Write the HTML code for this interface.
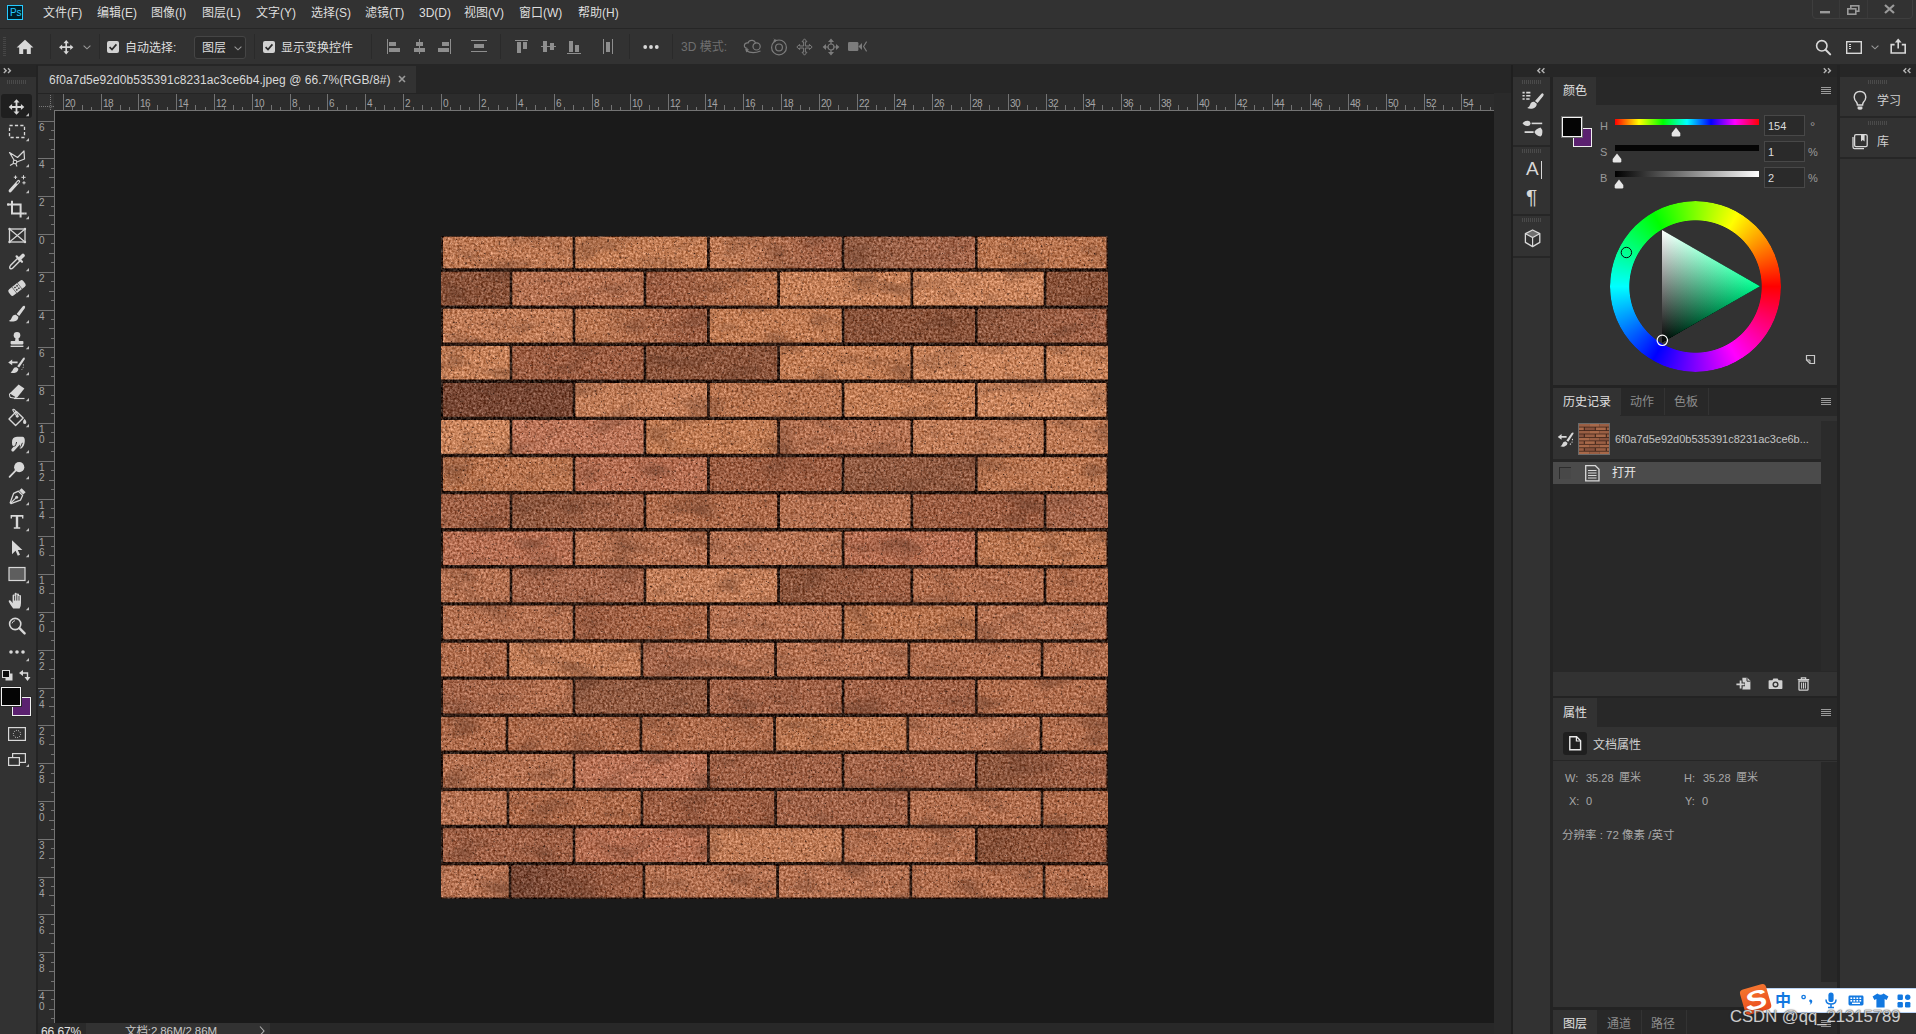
<!DOCTYPE html>
<html lang="zh-CN"><head><meta charset="utf-8"><title>Photoshop</title><style>
html,body{margin:0;padding:0;background:#282828;}
body{width:1916px;height:1034px;position:relative;overflow:hidden;font-family:"Liberation Sans","Noto Sans CJK SC",sans-serif;}
#r{position:absolute;left:0;top:0;width:1916px;height:1034px;overflow:hidden;background:#282828;}
#r div{position:absolute;box-sizing:border-box;}
.t{position:absolute;white-space:nowrap;}
.i{position:absolute;overflow:visible;}
</style></head><body><div id="r">
<div style="left:0px;top:0px;width:1916px;height:28px;background:#323232;"></div>
<div style="left:0px;top:28px;width:1916px;height:1px;background:#262626;"></div>
<div style="left:0px;top:29px;width:1916px;height:35px;background:#323232;"></div>
<div style="left:0px;top:64px;width:1916px;height:1px;background:#262626;"></div>
<div style="left:37px;top:65px;width:1474px;height:28px;background:#262626;"></div>
<div style="left:38px;top:66px;width:378px;height:27px;background:#323232;"></div>
<div style="left:0px;top:65px;width:36px;height:969px;background:#323232;"></div>
<div style="left:0px;top:65px;width:36px;height:12px;background:#262626;"></div>
<div style="left:36px;top:65px;width:2px;height:969px;background:#232323;"></div>
<div style="left:38px;top:93px;width:1456px;height:1px;background:#242424;"></div>
<div style="left:38px;top:94px;width:1456px;height:17px;background:#2c2c2c;"></div>
<div style="left:38px;top:94px;width:16px;height:16px;background:#313131;"></div>
<div style="left:38px;top:111px;width:17px;height:912px;background:#2c2c2c;"></div>
<div style="left:54px;top:110px;width:1440px;height:1px;background:#737373;"></div>
<div style="left:54px;top:110px;width:1px;height:913px;background:#737373;"></div>
<div style="left:55px;top:111px;width:1439px;height:912px;background:#1a1a1a;"></div>
<div style="left:38px;top:1023px;width:1457px;height:11px;background:#282828;"></div>
<div style="left:38px;top:1023px;width:48px;height:11px;background:#2a2a2a;"></div>
<div style="left:86px;top:1023px;width:184px;height:11px;background:#323232;"></div>
<div style="left:1494px;top:93px;width:17px;height:941px;background:#2a2a2a;"></div>
<div style="left:1511px;top:65px;width:2px;height:969px;background:#1f1f1f;"></div>
<div style="left:1513px;top:65px;width:324px;height:12px;background:#262626;"></div>
<div style="left:1513px;top:77px;width:37px;height:957px;background:#323232;"></div>
<div style="left:1550px;top:77px;width:3px;height:957px;background:#232323;"></div>
<div style="left:1553px;top:77px;width:284px;height:957px;background:#282828;"></div>
<div style="left:1837px;top:65px;width:3px;height:969px;background:#232323;"></div>
<div style="left:1840px;top:65px;width:76px;height:12px;background:#262626;"></div>
<div style="left:1840px;top:77px;width:76px;height:957px;background:#323232;"></div>
<span class="t" style="left:43px;top:5px;font-size:12px;line-height:16px;color:#dedede;">文件(F)</span>
<span class="t" style="left:97px;top:5px;font-size:12px;line-height:16px;color:#dedede;">编辑(E)</span>
<span class="t" style="left:151px;top:5px;font-size:12px;line-height:16px;color:#dedede;">图像(I)</span>
<span class="t" style="left:202px;top:5px;font-size:12px;line-height:16px;color:#dedede;">图层(L)</span>
<span class="t" style="left:256px;top:5px;font-size:12px;line-height:16px;color:#dedede;">文字(Y)</span>
<span class="t" style="left:311px;top:5px;font-size:12px;line-height:16px;color:#dedede;">选择(S)</span>
<span class="t" style="left:365px;top:5px;font-size:12px;line-height:16px;color:#dedede;">滤镜(T)</span>
<span class="t" style="left:419px;top:5px;font-size:12px;line-height:16px;color:#dedede;">3D(D)</span>
<span class="t" style="left:464px;top:5px;font-size:12px;line-height:16px;color:#dedede;">视图(V)</span>
<span class="t" style="left:519px;top:5px;font-size:12px;line-height:16px;color:#dedede;">窗口(W)</span>
<span class="t" style="left:578px;top:5px;font-size:12px;line-height:16px;color:#dedede;">帮助(H)</span>
<div style="left:7px;top:5px;width:16px;height:15px;border:1px solid #26c9ff;background:#001e28;"></div>
<span class="t" style="left:10px;top:5px;font-size:10px;line-height:15px;color:#26c9ff;letter-spacing:-0.2px">Ps</span>
<span class="t" style="left:125px;top:40px;font-size:12px;line-height:16px;color:#dedede;">自动选择:</span>
<div style="left:194px;top:36px;width:52px;height:23px;border:1px solid #454545;background:#2a2a2a;border-radius:3px;"></div>
<span class="t" style="left:202px;top:40px;font-size:12px;line-height:16px;color:#dedede;">图层</span>
<span class="t" style="left:281px;top:40px;font-size:12px;line-height:16px;color:#dedede;">显示变换控件</span>
<span class="t" style="left:681px;top:39px;font-size:12px;line-height:16px;color:#6f6f6f;">3D 模式:</span>
<span class="t" style="left:49px;top:72px;font-size:12px;line-height:16px;color:#d9d9d9;letter-spacing:0.07px;">6f0a7d5e92d0b535391c8231ac3ce6b4.jpeg @ 66.7%(RGB/8#)</span>
<span class="t" style="left:41px;top:1024px;font-size:12px;line-height:16px;color:#e0e0e0;letter-spacing:-0.1px;">66.67%</span>
<span class="t" style="left:125px;top:1023px;font-size:11.5px;line-height:16px;color:#c8c8c8;letter-spacing:-0.1px;">文档:2.86M/2.86M</span>
<svg class="i" style="left:0px;top:0px" width="1916" height="112" viewBox="0 0 1916 112" ><rect x="63" y="94" width="1" height="16" fill="#737373"/><rect x="72" y="107" width="1" height="3" fill="#737373"/><rect x="82" y="105" width="1" height="5" fill="#737373"/><rect x="91" y="107" width="1" height="3" fill="#737373"/><rect x="101" y="94" width="1" height="16" fill="#737373"/><rect x="110" y="107" width="1" height="3" fill="#737373"/><rect x="120" y="105" width="1" height="5" fill="#737373"/><rect x="129" y="107" width="1" height="3" fill="#737373"/><rect x="138" y="94" width="1" height="16" fill="#737373"/><rect x="148" y="107" width="1" height="3" fill="#737373"/><rect x="157" y="105" width="1" height="5" fill="#737373"/><rect x="167" y="107" width="1" height="3" fill="#737373"/><rect x="176" y="94" width="1" height="16" fill="#737373"/><rect x="186" y="107" width="1" height="3" fill="#737373"/><rect x="195" y="105" width="1" height="5" fill="#737373"/><rect x="205" y="107" width="1" height="3" fill="#737373"/><rect x="214" y="94" width="1" height="16" fill="#737373"/><rect x="224" y="107" width="1" height="3" fill="#737373"/><rect x="233" y="105" width="1" height="5" fill="#737373"/><rect x="242" y="107" width="1" height="3" fill="#737373"/><rect x="252" y="94" width="1" height="16" fill="#737373"/><rect x="261" y="107" width="1" height="3" fill="#737373"/><rect x="271" y="105" width="1" height="5" fill="#737373"/><rect x="280" y="107" width="1" height="3" fill="#737373"/><rect x="290" y="94" width="1" height="16" fill="#737373"/><rect x="299" y="107" width="1" height="3" fill="#737373"/><rect x="309" y="105" width="1" height="5" fill="#737373"/><rect x="318" y="107" width="1" height="3" fill="#737373"/><rect x="327" y="94" width="1" height="16" fill="#737373"/><rect x="337" y="107" width="1" height="3" fill="#737373"/><rect x="346" y="105" width="1" height="5" fill="#737373"/><rect x="356" y="107" width="1" height="3" fill="#737373"/><rect x="365" y="94" width="1" height="16" fill="#737373"/><rect x="375" y="107" width="1" height="3" fill="#737373"/><rect x="384" y="105" width="1" height="5" fill="#737373"/><rect x="394" y="107" width="1" height="3" fill="#737373"/><rect x="403" y="94" width="1" height="16" fill="#737373"/><rect x="413" y="107" width="1" height="3" fill="#737373"/><rect x="422" y="105" width="1" height="5" fill="#737373"/><rect x="431" y="107" width="1" height="3" fill="#737373"/><rect x="441" y="94" width="1" height="16" fill="#737373"/><rect x="450" y="107" width="1" height="3" fill="#737373"/><rect x="460" y="105" width="1" height="5" fill="#737373"/><rect x="469" y="107" width="1" height="3" fill="#737373"/><rect x="479" y="94" width="1" height="16" fill="#737373"/><rect x="488" y="107" width="1" height="3" fill="#737373"/><rect x="498" y="105" width="1" height="5" fill="#737373"/><rect x="507" y="107" width="1" height="3" fill="#737373"/><rect x="516" y="94" width="1" height="16" fill="#737373"/><rect x="526" y="107" width="1" height="3" fill="#737373"/><rect x="535" y="105" width="1" height="5" fill="#737373"/><rect x="545" y="107" width="1" height="3" fill="#737373"/><rect x="554" y="94" width="1" height="16" fill="#737373"/><rect x="564" y="107" width="1" height="3" fill="#737373"/><rect x="573" y="105" width="1" height="5" fill="#737373"/><rect x="583" y="107" width="1" height="3" fill="#737373"/><rect x="592" y="94" width="1" height="16" fill="#737373"/><rect x="602" y="107" width="1" height="3" fill="#737373"/><rect x="611" y="105" width="1" height="5" fill="#737373"/><rect x="620" y="107" width="1" height="3" fill="#737373"/><rect x="630" y="94" width="1" height="16" fill="#737373"/><rect x="639" y="107" width="1" height="3" fill="#737373"/><rect x="649" y="105" width="1" height="5" fill="#737373"/><rect x="658" y="107" width="1" height="3" fill="#737373"/><rect x="668" y="94" width="1" height="16" fill="#737373"/><rect x="677" y="107" width="1" height="3" fill="#737373"/><rect x="687" y="105" width="1" height="5" fill="#737373"/><rect x="696" y="107" width="1" height="3" fill="#737373"/><rect x="705" y="94" width="1" height="16" fill="#737373"/><rect x="715" y="107" width="1" height="3" fill="#737373"/><rect x="724" y="105" width="1" height="5" fill="#737373"/><rect x="734" y="107" width="1" height="3" fill="#737373"/><rect x="743" y="94" width="1" height="16" fill="#737373"/><rect x="753" y="107" width="1" height="3" fill="#737373"/><rect x="762" y="105" width="1" height="5" fill="#737373"/><rect x="772" y="107" width="1" height="3" fill="#737373"/><rect x="781" y="94" width="1" height="16" fill="#737373"/><rect x="791" y="107" width="1" height="3" fill="#737373"/><rect x="800" y="105" width="1" height="5" fill="#737373"/><rect x="809" y="107" width="1" height="3" fill="#737373"/><rect x="819" y="94" width="1" height="16" fill="#737373"/><rect x="828" y="107" width="1" height="3" fill="#737373"/><rect x="838" y="105" width="1" height="5" fill="#737373"/><rect x="847" y="107" width="1" height="3" fill="#737373"/><rect x="857" y="94" width="1" height="16" fill="#737373"/><rect x="866" y="107" width="1" height="3" fill="#737373"/><rect x="876" y="105" width="1" height="5" fill="#737373"/><rect x="885" y="107" width="1" height="3" fill="#737373"/><rect x="894" y="94" width="1" height="16" fill="#737373"/><rect x="904" y="107" width="1" height="3" fill="#737373"/><rect x="913" y="105" width="1" height="5" fill="#737373"/><rect x="923" y="107" width="1" height="3" fill="#737373"/><rect x="932" y="94" width="1" height="16" fill="#737373"/><rect x="942" y="107" width="1" height="3" fill="#737373"/><rect x="951" y="105" width="1" height="5" fill="#737373"/><rect x="961" y="107" width="1" height="3" fill="#737373"/><rect x="970" y="94" width="1" height="16" fill="#737373"/><rect x="980" y="107" width="1" height="3" fill="#737373"/><rect x="989" y="105" width="1" height="5" fill="#737373"/><rect x="998" y="107" width="1" height="3" fill="#737373"/><rect x="1008" y="94" width="1" height="16" fill="#737373"/><rect x="1017" y="107" width="1" height="3" fill="#737373"/><rect x="1027" y="105" width="1" height="5" fill="#737373"/><rect x="1036" y="107" width="1" height="3" fill="#737373"/><rect x="1046" y="94" width="1" height="16" fill="#737373"/><rect x="1055" y="107" width="1" height="3" fill="#737373"/><rect x="1065" y="105" width="1" height="5" fill="#737373"/><rect x="1074" y="107" width="1" height="3" fill="#737373"/><rect x="1083" y="94" width="1" height="16" fill="#737373"/><rect x="1093" y="107" width="1" height="3" fill="#737373"/><rect x="1102" y="105" width="1" height="5" fill="#737373"/><rect x="1112" y="107" width="1" height="3" fill="#737373"/><rect x="1121" y="94" width="1" height="16" fill="#737373"/><rect x="1131" y="107" width="1" height="3" fill="#737373"/><rect x="1140" y="105" width="1" height="5" fill="#737373"/><rect x="1150" y="107" width="1" height="3" fill="#737373"/><rect x="1159" y="94" width="1" height="16" fill="#737373"/><rect x="1169" y="107" width="1" height="3" fill="#737373"/><rect x="1178" y="105" width="1" height="5" fill="#737373"/><rect x="1187" y="107" width="1" height="3" fill="#737373"/><rect x="1197" y="94" width="1" height="16" fill="#737373"/><rect x="1206" y="107" width="1" height="3" fill="#737373"/><rect x="1216" y="105" width="1" height="5" fill="#737373"/><rect x="1225" y="107" width="1" height="3" fill="#737373"/><rect x="1235" y="94" width="1" height="16" fill="#737373"/><rect x="1244" y="107" width="1" height="3" fill="#737373"/><rect x="1254" y="105" width="1" height="5" fill="#737373"/><rect x="1263" y="107" width="1" height="3" fill="#737373"/><rect x="1272" y="94" width="1" height="16" fill="#737373"/><rect x="1282" y="107" width="1" height="3" fill="#737373"/><rect x="1291" y="105" width="1" height="5" fill="#737373"/><rect x="1301" y="107" width="1" height="3" fill="#737373"/><rect x="1310" y="94" width="1" height="16" fill="#737373"/><rect x="1320" y="107" width="1" height="3" fill="#737373"/><rect x="1329" y="105" width="1" height="5" fill="#737373"/><rect x="1339" y="107" width="1" height="3" fill="#737373"/><rect x="1348" y="94" width="1" height="16" fill="#737373"/><rect x="1358" y="107" width="1" height="3" fill="#737373"/><rect x="1367" y="105" width="1" height="5" fill="#737373"/><rect x="1376" y="107" width="1" height="3" fill="#737373"/><rect x="1386" y="94" width="1" height="16" fill="#737373"/><rect x="1395" y="107" width="1" height="3" fill="#737373"/><rect x="1405" y="105" width="1" height="5" fill="#737373"/><rect x="1414" y="107" width="1" height="3" fill="#737373"/><rect x="1424" y="94" width="1" height="16" fill="#737373"/><rect x="1433" y="107" width="1" height="3" fill="#737373"/><rect x="1443" y="105" width="1" height="5" fill="#737373"/><rect x="1452" y="107" width="1" height="3" fill="#737373"/><rect x="1461" y="94" width="1" height="16" fill="#737373"/><rect x="1471" y="107" width="1" height="3" fill="#737373"/><rect x="1480" y="105" width="1" height="5" fill="#737373"/><rect x="1490" y="107" width="1" height="3" fill="#737373"/></svg>
<span class="t" style="left:65px;top:98px;font-size:10px;line-height:12px;color:#a4a4a4;letter-spacing:-0.5px;">20</span>
<span class="t" style="left:103px;top:98px;font-size:10px;line-height:12px;color:#a4a4a4;letter-spacing:-0.5px;">18</span>
<span class="t" style="left:140px;top:98px;font-size:10px;line-height:12px;color:#a4a4a4;letter-spacing:-0.5px;">16</span>
<span class="t" style="left:178px;top:98px;font-size:10px;line-height:12px;color:#a4a4a4;letter-spacing:-0.5px;">14</span>
<span class="t" style="left:216px;top:98px;font-size:10px;line-height:12px;color:#a4a4a4;letter-spacing:-0.5px;">12</span>
<span class="t" style="left:254px;top:98px;font-size:10px;line-height:12px;color:#a4a4a4;letter-spacing:-0.5px;">10</span>
<span class="t" style="left:292px;top:98px;font-size:10px;line-height:12px;color:#a4a4a4;letter-spacing:-0.5px;">8</span>
<span class="t" style="left:329px;top:98px;font-size:10px;line-height:12px;color:#a4a4a4;letter-spacing:-0.5px;">6</span>
<span class="t" style="left:367px;top:98px;font-size:10px;line-height:12px;color:#a4a4a4;letter-spacing:-0.5px;">4</span>
<span class="t" style="left:405px;top:98px;font-size:10px;line-height:12px;color:#a4a4a4;letter-spacing:-0.5px;">2</span>
<span class="t" style="left:443px;top:98px;font-size:10px;line-height:12px;color:#a4a4a4;letter-spacing:-0.5px;">0</span>
<span class="t" style="left:481px;top:98px;font-size:10px;line-height:12px;color:#a4a4a4;letter-spacing:-0.5px;">2</span>
<span class="t" style="left:518px;top:98px;font-size:10px;line-height:12px;color:#a4a4a4;letter-spacing:-0.5px;">4</span>
<span class="t" style="left:556px;top:98px;font-size:10px;line-height:12px;color:#a4a4a4;letter-spacing:-0.5px;">6</span>
<span class="t" style="left:594px;top:98px;font-size:10px;line-height:12px;color:#a4a4a4;letter-spacing:-0.5px;">8</span>
<span class="t" style="left:632px;top:98px;font-size:10px;line-height:12px;color:#a4a4a4;letter-spacing:-0.5px;">10</span>
<span class="t" style="left:670px;top:98px;font-size:10px;line-height:12px;color:#a4a4a4;letter-spacing:-0.5px;">12</span>
<span class="t" style="left:707px;top:98px;font-size:10px;line-height:12px;color:#a4a4a4;letter-spacing:-0.5px;">14</span>
<span class="t" style="left:745px;top:98px;font-size:10px;line-height:12px;color:#a4a4a4;letter-spacing:-0.5px;">16</span>
<span class="t" style="left:783px;top:98px;font-size:10px;line-height:12px;color:#a4a4a4;letter-spacing:-0.5px;">18</span>
<span class="t" style="left:821px;top:98px;font-size:10px;line-height:12px;color:#a4a4a4;letter-spacing:-0.5px;">20</span>
<span class="t" style="left:859px;top:98px;font-size:10px;line-height:12px;color:#a4a4a4;letter-spacing:-0.5px;">22</span>
<span class="t" style="left:896px;top:98px;font-size:10px;line-height:12px;color:#a4a4a4;letter-spacing:-0.5px;">24</span>
<span class="t" style="left:934px;top:98px;font-size:10px;line-height:12px;color:#a4a4a4;letter-spacing:-0.5px;">26</span>
<span class="t" style="left:972px;top:98px;font-size:10px;line-height:12px;color:#a4a4a4;letter-spacing:-0.5px;">28</span>
<span class="t" style="left:1010px;top:98px;font-size:10px;line-height:12px;color:#a4a4a4;letter-spacing:-0.5px;">30</span>
<span class="t" style="left:1048px;top:98px;font-size:10px;line-height:12px;color:#a4a4a4;letter-spacing:-0.5px;">32</span>
<span class="t" style="left:1085px;top:98px;font-size:10px;line-height:12px;color:#a4a4a4;letter-spacing:-0.5px;">34</span>
<span class="t" style="left:1123px;top:98px;font-size:10px;line-height:12px;color:#a4a4a4;letter-spacing:-0.5px;">36</span>
<span class="t" style="left:1161px;top:98px;font-size:10px;line-height:12px;color:#a4a4a4;letter-spacing:-0.5px;">38</span>
<span class="t" style="left:1199px;top:98px;font-size:10px;line-height:12px;color:#a4a4a4;letter-spacing:-0.5px;">40</span>
<span class="t" style="left:1237px;top:98px;font-size:10px;line-height:12px;color:#a4a4a4;letter-spacing:-0.5px;">42</span>
<span class="t" style="left:1274px;top:98px;font-size:10px;line-height:12px;color:#a4a4a4;letter-spacing:-0.5px;">44</span>
<span class="t" style="left:1312px;top:98px;font-size:10px;line-height:12px;color:#a4a4a4;letter-spacing:-0.5px;">46</span>
<span class="t" style="left:1350px;top:98px;font-size:10px;line-height:12px;color:#a4a4a4;letter-spacing:-0.5px;">48</span>
<span class="t" style="left:1388px;top:98px;font-size:10px;line-height:12px;color:#a4a4a4;letter-spacing:-0.5px;">50</span>
<span class="t" style="left:1426px;top:98px;font-size:10px;line-height:12px;color:#a4a4a4;letter-spacing:-0.5px;">52</span>
<span class="t" style="left:1463px;top:98px;font-size:10px;line-height:12px;color:#a4a4a4;letter-spacing:-0.5px;">54</span>
<svg class="i" style="left:0px;top:0px" width="60" height="112" viewBox="0 0 60 112" ><path d="M39 106.5H54" stroke="#7a7a7a" stroke-dasharray="1 1" fill="none"/><path d="M50.5 95V110" stroke="#7a7a7a" stroke-dasharray="1 1" fill="none"/><rect x="49.5" y="105.5" width="2" height="2" fill="#313131" stroke="#7a7a7a" stroke-width="0.8" transform="rotate(45 50.5 106.5)"/></svg>
<svg class="i" style="left:0px;top:0px" width="60" height="1034" viewBox="0 0 60 1034" ><rect x="38" y="121" width="16" height="1" fill="#737373"/><rect x="51" y="130" width="3" height="1" fill="#737373"/><rect x="49" y="139" width="5" height="1" fill="#737373"/><rect x="51" y="149" width="3" height="1" fill="#737373"/><rect x="38" y="158" width="16" height="1" fill="#737373"/><rect x="51" y="168" width="3" height="1" fill="#737373"/><rect x="49" y="177" width="5" height="1" fill="#737373"/><rect x="51" y="187" width="3" height="1" fill="#737373"/><rect x="38" y="196" width="16" height="1" fill="#737373"/><rect x="51" y="206" width="3" height="1" fill="#737373"/><rect x="49" y="215" width="5" height="1" fill="#737373"/><rect x="51" y="224" width="3" height="1" fill="#737373"/><rect x="38" y="234" width="16" height="1" fill="#737373"/><rect x="51" y="243" width="3" height="1" fill="#737373"/><rect x="49" y="253" width="5" height="1" fill="#737373"/><rect x="51" y="262" width="3" height="1" fill="#737373"/><rect x="38" y="272" width="16" height="1" fill="#737373"/><rect x="51" y="281" width="3" height="1" fill="#737373"/><rect x="49" y="291" width="5" height="1" fill="#737373"/><rect x="51" y="300" width="3" height="1" fill="#737373"/><rect x="38" y="310" width="16" height="1" fill="#737373"/><rect x="51" y="319" width="3" height="1" fill="#737373"/><rect x="49" y="328" width="5" height="1" fill="#737373"/><rect x="51" y="338" width="3" height="1" fill="#737373"/><rect x="38" y="347" width="16" height="1" fill="#737373"/><rect x="51" y="357" width="3" height="1" fill="#737373"/><rect x="49" y="366" width="5" height="1" fill="#737373"/><rect x="51" y="376" width="3" height="1" fill="#737373"/><rect x="38" y="385" width="16" height="1" fill="#737373"/><rect x="51" y="395" width="3" height="1" fill="#737373"/><rect x="49" y="404" width="5" height="1" fill="#737373"/><rect x="51" y="413" width="3" height="1" fill="#737373"/><rect x="38" y="423" width="16" height="1" fill="#737373"/><rect x="51" y="432" width="3" height="1" fill="#737373"/><rect x="49" y="442" width="5" height="1" fill="#737373"/><rect x="51" y="451" width="3" height="1" fill="#737373"/><rect x="38" y="461" width="16" height="1" fill="#737373"/><rect x="51" y="470" width="3" height="1" fill="#737373"/><rect x="49" y="480" width="5" height="1" fill="#737373"/><rect x="51" y="489" width="3" height="1" fill="#737373"/><rect x="38" y="499" width="16" height="1" fill="#737373"/><rect x="51" y="508" width="3" height="1" fill="#737373"/><rect x="49" y="517" width="5" height="1" fill="#737373"/><rect x="51" y="527" width="3" height="1" fill="#737373"/><rect x="38" y="536" width="16" height="1" fill="#737373"/><rect x="51" y="546" width="3" height="1" fill="#737373"/><rect x="49" y="555" width="5" height="1" fill="#737373"/><rect x="51" y="565" width="3" height="1" fill="#737373"/><rect x="38" y="574" width="16" height="1" fill="#737373"/><rect x="51" y="584" width="3" height="1" fill="#737373"/><rect x="49" y="593" width="5" height="1" fill="#737373"/><rect x="51" y="603" width="3" height="1" fill="#737373"/><rect x="38" y="612" width="16" height="1" fill="#737373"/><rect x="51" y="621" width="3" height="1" fill="#737373"/><rect x="49" y="631" width="5" height="1" fill="#737373"/><rect x="51" y="640" width="3" height="1" fill="#737373"/><rect x="38" y="650" width="16" height="1" fill="#737373"/><rect x="51" y="659" width="3" height="1" fill="#737373"/><rect x="49" y="669" width="5" height="1" fill="#737373"/><rect x="51" y="678" width="3" height="1" fill="#737373"/><rect x="38" y="688" width="16" height="1" fill="#737373"/><rect x="51" y="697" width="3" height="1" fill="#737373"/><rect x="49" y="706" width="5" height="1" fill="#737373"/><rect x="51" y="716" width="3" height="1" fill="#737373"/><rect x="38" y="725" width="16" height="1" fill="#737373"/><rect x="51" y="735" width="3" height="1" fill="#737373"/><rect x="49" y="744" width="5" height="1" fill="#737373"/><rect x="51" y="754" width="3" height="1" fill="#737373"/><rect x="38" y="763" width="16" height="1" fill="#737373"/><rect x="51" y="773" width="3" height="1" fill="#737373"/><rect x="49" y="782" width="5" height="1" fill="#737373"/><rect x="51" y="792" width="3" height="1" fill="#737373"/><rect x="38" y="801" width="16" height="1" fill="#737373"/><rect x="51" y="810" width="3" height="1" fill="#737373"/><rect x="49" y="820" width="5" height="1" fill="#737373"/><rect x="51" y="829" width="3" height="1" fill="#737373"/><rect x="38" y="839" width="16" height="1" fill="#737373"/><rect x="51" y="848" width="3" height="1" fill="#737373"/><rect x="49" y="858" width="5" height="1" fill="#737373"/><rect x="51" y="867" width="3" height="1" fill="#737373"/><rect x="38" y="877" width="16" height="1" fill="#737373"/><rect x="51" y="886" width="3" height="1" fill="#737373"/><rect x="49" y="895" width="5" height="1" fill="#737373"/><rect x="51" y="905" width="3" height="1" fill="#737373"/><rect x="38" y="914" width="16" height="1" fill="#737373"/><rect x="51" y="924" width="3" height="1" fill="#737373"/><rect x="49" y="933" width="5" height="1" fill="#737373"/><rect x="51" y="943" width="3" height="1" fill="#737373"/><rect x="38" y="952" width="16" height="1" fill="#737373"/><rect x="51" y="962" width="3" height="1" fill="#737373"/><rect x="49" y="971" width="5" height="1" fill="#737373"/><rect x="51" y="981" width="3" height="1" fill="#737373"/><rect x="38" y="990" width="16" height="1" fill="#737373"/><rect x="51" y="999" width="3" height="1" fill="#737373"/><rect x="49" y="1009" width="5" height="1" fill="#737373"/><rect x="51" y="1018" width="3" height="1" fill="#737373"/></svg>
<span class="t" style="left:39px;top:122px;font-size:10px;line-height:12px;color:#a4a4a4;">6</span>
<span class="t" style="left:39px;top:159px;font-size:10px;line-height:12px;color:#a4a4a4;">4</span>
<span class="t" style="left:39px;top:197px;font-size:10px;line-height:12px;color:#a4a4a4;">2</span>
<span class="t" style="left:39px;top:235px;font-size:10px;line-height:12px;color:#a4a4a4;">0</span>
<span class="t" style="left:39px;top:273px;font-size:10px;line-height:12px;color:#a4a4a4;">2</span>
<span class="t" style="left:39px;top:311px;font-size:10px;line-height:12px;color:#a4a4a4;">4</span>
<span class="t" style="left:39px;top:348px;font-size:10px;line-height:12px;color:#a4a4a4;">6</span>
<span class="t" style="left:39px;top:386px;font-size:10px;line-height:12px;color:#a4a4a4;">8</span>
<span class="t" style="left:39px;top:424px;font-size:10px;line-height:12px;color:#a4a4a4;">1</span>
<span class="t" style="left:39px;top:434px;font-size:10px;line-height:12px;color:#a4a4a4;">0</span>
<span class="t" style="left:39px;top:462px;font-size:10px;line-height:12px;color:#a4a4a4;">1</span>
<span class="t" style="left:39px;top:472px;font-size:10px;line-height:12px;color:#a4a4a4;">2</span>
<span class="t" style="left:39px;top:500px;font-size:10px;line-height:12px;color:#a4a4a4;">1</span>
<span class="t" style="left:39px;top:510px;font-size:10px;line-height:12px;color:#a4a4a4;">4</span>
<span class="t" style="left:39px;top:537px;font-size:10px;line-height:12px;color:#a4a4a4;">1</span>
<span class="t" style="left:39px;top:547px;font-size:10px;line-height:12px;color:#a4a4a4;">6</span>
<span class="t" style="left:39px;top:575px;font-size:10px;line-height:12px;color:#a4a4a4;">1</span>
<span class="t" style="left:39px;top:585px;font-size:10px;line-height:12px;color:#a4a4a4;">8</span>
<span class="t" style="left:39px;top:613px;font-size:10px;line-height:12px;color:#a4a4a4;">2</span>
<span class="t" style="left:39px;top:623px;font-size:10px;line-height:12px;color:#a4a4a4;">0</span>
<span class="t" style="left:39px;top:651px;font-size:10px;line-height:12px;color:#a4a4a4;">2</span>
<span class="t" style="left:39px;top:661px;font-size:10px;line-height:12px;color:#a4a4a4;">2</span>
<span class="t" style="left:39px;top:689px;font-size:10px;line-height:12px;color:#a4a4a4;">2</span>
<span class="t" style="left:39px;top:699px;font-size:10px;line-height:12px;color:#a4a4a4;">4</span>
<span class="t" style="left:39px;top:726px;font-size:10px;line-height:12px;color:#a4a4a4;">2</span>
<span class="t" style="left:39px;top:736px;font-size:10px;line-height:12px;color:#a4a4a4;">6</span>
<span class="t" style="left:39px;top:764px;font-size:10px;line-height:12px;color:#a4a4a4;">2</span>
<span class="t" style="left:39px;top:774px;font-size:10px;line-height:12px;color:#a4a4a4;">8</span>
<span class="t" style="left:39px;top:802px;font-size:10px;line-height:12px;color:#a4a4a4;">3</span>
<span class="t" style="left:39px;top:812px;font-size:10px;line-height:12px;color:#a4a4a4;">0</span>
<span class="t" style="left:39px;top:840px;font-size:10px;line-height:12px;color:#a4a4a4;">3</span>
<span class="t" style="left:39px;top:850px;font-size:10px;line-height:12px;color:#a4a4a4;">2</span>
<span class="t" style="left:39px;top:878px;font-size:10px;line-height:12px;color:#a4a4a4;">3</span>
<span class="t" style="left:39px;top:888px;font-size:10px;line-height:12px;color:#a4a4a4;">4</span>
<span class="t" style="left:39px;top:915px;font-size:10px;line-height:12px;color:#a4a4a4;">3</span>
<span class="t" style="left:39px;top:925px;font-size:10px;line-height:12px;color:#a4a4a4;">6</span>
<span class="t" style="left:39px;top:953px;font-size:10px;line-height:12px;color:#a4a4a4;">3</span>
<span class="t" style="left:39px;top:963px;font-size:10px;line-height:12px;color:#a4a4a4;">8</span>
<span class="t" style="left:39px;top:991px;font-size:10px;line-height:12px;color:#a4a4a4;">4</span>
<span class="t" style="left:39px;top:1001px;font-size:10px;line-height:12px;color:#a4a4a4;">0</span>
<svg class="i" style="left:441px;top:235.5px;overflow:hidden" width="667" height="663" viewBox="0 0 667 663"><defs><linearGradient id="bg1" x1="0" x2="1" y1="0" y2="0"><stop offset="0.15" stop-color="#bf7b56"/><stop offset="0.85" stop-color="#a36449"/></linearGradient><linearGradient id="bg2" x1="0" x2="1" y1="0" y2="0"><stop offset="0.15" stop-color="#955e45"/><stop offset="0.85" stop-color="#a7684d"/></linearGradient><linearGradient id="bg3" x1="0" x2="1" y1="0" y2="0"><stop offset="0.15" stop-color="#9e5f44"/><stop offset="0.85" stop-color="#ba7651"/></linearGradient><linearGradient id="bg4" x1="0" x2="1" y1="0" y2="0"><stop offset="0.15" stop-color="#bc7853"/><stop offset="0.85" stop-color="#a06146"/></linearGradient><linearGradient id="bg5" x1="0" x2="1" y1="0" y2="0"><stop offset="0.15" stop-color="#915a41"/><stop offset="0.85" stop-color="#a36449"/></linearGradient><linearGradient id="bg6" x1="0" x2="1" y1="0" y2="0"><stop offset="0.15" stop-color="#915a41"/><stop offset="0.85" stop-color="#a36449"/></linearGradient><linearGradient id="bg7" x1="0" x2="1" y1="0" y2="0"><stop offset="0.15" stop-color="#8e573e"/><stop offset="0.85" stop-color="#a06146"/></linearGradient><linearGradient id="bg8" x1="0" x2="1" y1="0" y2="0"><stop offset="0.15" stop-color="#9e5f44"/><stop offset="0.85" stop-color="#ae6b4b"/></linearGradient><linearGradient id="bg9" x1="0" x2="1" y1="0" y2="0"><stop offset="0.15" stop-color="#a7684d"/><stop offset="0.85" stop-color="#b77454"/></linearGradient><linearGradient id="bg10" x1="0" x2="1" y1="0" y2="0"><stop offset="0.15" stop-color="#a4654a"/><stop offset="0.85" stop-color="#b47151"/></linearGradient><linearGradient id="bg11" x1="0" x2="1" y1="0" y2="0"><stop offset="0.15" stop-color="#8f583f"/><stop offset="0.85" stop-color="#a16247"/></linearGradient><linearGradient id="bg12" x1="0" x2="1" y1="0" y2="0"><stop offset="0.15" stop-color="#8b543b"/><stop offset="0.85" stop-color="#9d5e43"/></linearGradient><linearGradient id="bg13" x1="0" x2="1" y1="0" y2="0"><stop offset="0.15" stop-color="#7b4a37"/><stop offset="0.85" stop-color="#9e5f44"/></linearGradient><filter id="bn" x="0" y="0" width="100%" height="100%" color-interpolation-filters="sRGB">
<feGaussianBlur in="SourceGraphic" stdDeviation="0.5" result="src"/>
<feTurbulence type="fractalNoise" baseFrequency="0.42" numOctaves="3" seed="3" result="n"/>
<feColorMatrix in="n" type="matrix" values="1 0 0 0 0  1 0 0 0 0  1 0 0 0 0  0 0 0 0 1" result="g"/>
<feComposite in="src" in2="g" operator="arithmetic" k1="0" k2="1" k3="0.6" k4="-0.3" result="tex"/>
<feColorMatrix in="n" type="matrix" values="0 0 0 0 0  0 0 0 0 0  0 0 0 0 0  0 5 0 0 -3.45" result="a"/>
<feFlood flood-color="#3c2015" result="f"/>
<feComposite in="f" in2="a" operator="in" result="spk"/>
<feTurbulence type="fractalNoise" baseFrequency="0.025 0.05" numOctaves="2" seed="11" result="n2"/>
<feColorMatrix in="n2" type="matrix" values="0 0 0 0 0  0 0 0 0 0  0 0 0 0 0  0 0 1.2 0 -0.62" result="a2"/>
<feFlood flood-color="#5a3424" result="f2"/>
<feComposite in="f2" in2="a2" operator="in" result="blot"/>
<feTurbulence type="fractalNoise" baseFrequency="0.3" numOctaves="2" seed="23" result="n3"/>
<feColorMatrix in="n3" type="matrix" values="0 0 0 0 0  0 0 0 0 0  0 0 0 0 0  4 0 0 0 -2.62" result="a3"/>
<feFlood flood-color="#55301f" result="f3"/>
<feComposite in="f3" in2="a3" operator="in" result="fleck"/>
<feMerge><feMergeNode in="tex"/><feMergeNode in="blot"/><feMergeNode in="fleck"/><feMergeNode in="spk"/></feMerge>
<feGaussianBlur stdDeviation="0.4"/>
</filter></defs><g filter="url(#bn)"><rect x="-2" y="-2" width="671" height="667" fill="#24150e"/><rect x="2.0" y="0.8" width="129.7" height="31.5" rx="1.2" fill="#be7a55"/><rect x="134.3" y="0.8" width="131.7" height="31.5" rx="1.2" fill="#c37e56"/><rect x="268.8" y="0.8" width="131.9" height="31.5" rx="1.2" fill="url(#bg1)"/><rect x="403.4" y="0.8" width="130.6" height="31.5" rx="1.2" fill="url(#bg2)"/><rect x="536.6" y="0.8" width="128.9" height="31.5" rx="1.2" fill="#b97550"/><rect x="0.0" y="35.7" width="68.7" height="33.7" rx="1.2" fill="#8c553c"/><rect x="71.3" y="35.7" width="131.3" height="33.7" rx="1.2" fill="#b57252"/><rect x="205.3" y="35.7" width="130.9" height="33.7" rx="1.2" fill="url(#bg3)"/><rect x="339.0" y="35.7" width="130.5" height="33.7" rx="1.2" fill="#c68159"/><rect x="472.2" y="35.7" width="130.5" height="33.7" rx="1.2" fill="#ca855d"/><rect x="605.4" y="35.7" width="61.6" height="33.7" rx="1.2" fill="#8b543b"/><rect x="2.0" y="72.8" width="129.7" height="33.7" rx="1.2" fill="#c17d58"/><rect x="134.3" y="72.8" width="131.7" height="33.7" rx="1.2" fill="url(#bg4)"/><rect x="268.8" y="72.8" width="131.9" height="33.7" rx="1.2" fill="#c17c54"/><rect x="403.4" y="72.8" width="130.6" height="33.7" rx="1.2" fill="#8c553c"/><rect x="536.6" y="72.8" width="128.9" height="33.7" rx="1.2" fill="url(#bg5)"/><rect x="0.0" y="109.9" width="68.7" height="33.7" rx="1.2" fill="#c7825a"/><rect x="71.3" y="109.9" width="131.3" height="33.7" rx="1.2" fill="#9e5f44"/><rect x="205.3" y="109.9" width="130.9" height="33.7" rx="1.2" fill="#8e573e"/><rect x="339.0" y="109.9" width="130.5" height="33.7" rx="1.2" fill="#c27d55"/><rect x="472.2" y="109.9" width="130.5" height="33.7" rx="1.2" fill="#c9845c"/><rect x="605.4" y="109.9" width="61.6" height="33.7" rx="1.2" fill="#c7825a"/><rect x="2.0" y="147.0" width="129.7" height="33.7" rx="1.2" fill="#7a4936"/><rect x="134.3" y="147.0" width="131.7" height="33.7" rx="1.2" fill="#c27e59"/><rect x="268.8" y="147.0" width="131.9" height="33.7" rx="1.2" fill="#ba7651"/><rect x="403.4" y="147.0" width="130.6" height="33.7" rx="1.2" fill="#c47f57"/><rect x="536.6" y="147.0" width="128.9" height="33.7" rx="1.2" fill="#cb865e"/><rect x="0.0" y="184.1" width="68.7" height="33.7" rx="1.2" fill="#cb865e"/><rect x="71.3" y="184.1" width="131.3" height="33.7" rx="1.2" fill="#bc7559"/><rect x="205.3" y="184.1" width="130.9" height="33.7" rx="1.2" fill="#c17c54"/><rect x="339.0" y="184.1" width="130.5" height="33.7" rx="1.2" fill="#b67353"/><rect x="472.2" y="184.1" width="130.5" height="33.7" rx="1.2" fill="#c27e59"/><rect x="605.4" y="184.1" width="61.6" height="33.7" rx="1.2" fill="#bf7b56"/><rect x="2.0" y="221.2" width="129.7" height="33.7" rx="1.2" fill="#b97550"/><rect x="134.3" y="221.2" width="131.7" height="33.7" rx="1.2" fill="#b66f53"/><rect x="268.8" y="221.2" width="131.9" height="33.7" rx="1.2" fill="#9d5e43"/><rect x="403.4" y="221.2" width="130.6" height="33.7" rx="1.2" fill="#935c43"/><rect x="536.6" y="221.2" width="128.9" height="33.7" rx="1.2" fill="#bb7752"/><rect x="0.0" y="258.3" width="68.7" height="33.7" rx="1.2" fill="#a16247"/><rect x="71.3" y="258.3" width="131.3" height="33.7" rx="1.2" fill="url(#bg6)"/><rect x="205.3" y="258.3" width="130.9" height="33.7" rx="1.2" fill="#af6c4c"/><rect x="339.0" y="258.3" width="130.5" height="33.7" rx="1.2" fill="#b57252"/><rect x="472.2" y="258.3" width="130.5" height="33.7" rx="1.2" fill="#9e5f44"/><rect x="605.4" y="258.3" width="61.6" height="33.7" rx="1.2" fill="#a6674c"/><rect x="2.0" y="295.4" width="129.7" height="33.7" rx="1.2" fill="#b77054"/><rect x="134.3" y="295.4" width="131.7" height="33.7" rx="1.2" fill="#b57252"/><rect x="268.8" y="295.4" width="131.9" height="33.7" rx="1.2" fill="#b77454"/><rect x="403.4" y="295.4" width="130.6" height="33.7" rx="1.2" fill="#b56e52"/><rect x="536.6" y="295.4" width="128.9" height="33.7" rx="1.2" fill="#ba7651"/><rect x="0.0" y="332.5" width="68.7" height="33.7" rx="1.2" fill="#b67353"/><rect x="71.3" y="332.5" width="131.3" height="33.7" rx="1.2" fill="#a6674c"/><rect x="205.3" y="332.5" width="130.9" height="33.7" rx="1.2" fill="#c37f5a"/><rect x="339.0" y="332.5" width="130.5" height="33.7" rx="1.2" fill="url(#bg7)"/><rect x="472.2" y="332.5" width="130.5" height="33.7" rx="1.2" fill="#b26f4f"/><rect x="605.4" y="332.5" width="61.6" height="33.7" rx="1.2" fill="#ae6b4b"/><rect x="2.0" y="369.6" width="129.7" height="33.7" rx="1.2" fill="#b57252"/><rect x="134.3" y="369.6" width="131.7" height="33.7" rx="1.2" fill="url(#bg8)"/><rect x="268.8" y="369.6" width="131.9" height="33.7" rx="1.2" fill="#b67353"/><rect x="403.4" y="369.6" width="130.6" height="33.7" rx="1.2" fill="#b97550"/><rect x="536.6" y="369.6" width="128.9" height="33.7" rx="1.2" fill="#b67353"/><rect x="0.0" y="406.7" width="65.7" height="33.7" rx="1.2" fill="#b06d4d"/><rect x="68.3" y="406.7" width="131.3" height="33.7" rx="1.2" fill="#c07c57"/><rect x="202.3" y="406.7" width="130.9" height="33.7" rx="1.2" fill="url(#bg9)"/><rect x="336.0" y="406.7" width="130.5" height="33.7" rx="1.2" fill="#b57252"/><rect x="469.2" y="406.7" width="130.5" height="33.7" rx="1.2" fill="#b37050"/><rect x="602.4" y="406.7" width="64.6" height="33.7" rx="1.2" fill="#b26f4f"/><rect x="2.0" y="443.8" width="129.7" height="33.7" rx="1.2" fill="url(#bg10)"/><rect x="134.3" y="443.8" width="131.7" height="33.7" rx="1.2" fill="#945d44"/><rect x="268.8" y="443.8" width="131.9" height="33.7" rx="1.2" fill="#a4654a"/><rect x="403.4" y="443.8" width="130.6" height="33.7" rx="1.2" fill="#a26348"/><rect x="536.6" y="443.8" width="128.9" height="33.7" rx="1.2" fill="#b16e4e"/><rect x="0.0" y="480.9" width="64.7" height="33.7" rx="1.2" fill="#b06d4d"/><rect x="67.3" y="480.9" width="131.3" height="33.7" rx="1.2" fill="#af6c4c"/><rect x="201.3" y="480.9" width="130.9" height="33.7" rx="1.2" fill="#b06d4d"/><rect x="335.0" y="480.9" width="130.5" height="33.7" rx="1.2" fill="#ba7651"/><rect x="468.2" y="480.9" width="130.5" height="33.7" rx="1.2" fill="#b67353"/><rect x="601.4" y="480.9" width="65.6" height="33.7" rx="1.2" fill="#b16e4e"/><rect x="2.0" y="518.0" width="129.7" height="33.7" rx="1.2" fill="#b57252"/><rect x="134.3" y="518.0" width="131.7" height="33.7" rx="1.2" fill="#ba7357"/><rect x="268.8" y="518.0" width="131.9" height="33.7" rx="1.2" fill="#a26348"/><rect x="403.4" y="518.0" width="130.6" height="33.7" rx="1.2" fill="#a4654a"/><rect x="536.6" y="518.0" width="128.9" height="33.7" rx="1.2" fill="url(#bg11)"/><rect x="0.0" y="555.1" width="65.7" height="33.7" rx="1.2" fill="#b67353"/><rect x="68.3" y="555.1" width="131.3" height="33.7" rx="1.2" fill="#ae6b4b"/><rect x="202.3" y="555.1" width="130.9" height="33.7" rx="1.2" fill="#9e5f44"/><rect x="336.0" y="555.1" width="130.5" height="33.7" rx="1.2" fill="#a5664b"/><rect x="469.2" y="555.1" width="130.5" height="33.7" rx="1.2" fill="#b37050"/><rect x="602.4" y="555.1" width="64.6" height="33.7" rx="1.2" fill="#af6c4c"/><rect x="2.0" y="592.2" width="129.7" height="33.7" rx="1.2" fill="#a26348"/><rect x="134.3" y="592.2" width="131.7" height="33.7" rx="1.2" fill="#b56e52"/><rect x="268.8" y="592.2" width="131.9" height="33.7" rx="1.2" fill="#c07c57"/><rect x="403.4" y="592.2" width="130.6" height="33.7" rx="1.2" fill="#b37050"/><rect x="536.6" y="592.2" width="128.9" height="33.7" rx="1.2" fill="url(#bg12)"/><rect x="0.0" y="629.3" width="67.7" height="32.2" rx="1.2" fill="#b77454"/><rect x="70.3" y="629.3" width="131.3" height="32.2" rx="1.2" fill="url(#bg13)"/><rect x="204.3" y="629.3" width="130.9" height="32.2" rx="1.2" fill="#b57252"/><rect x="338.0" y="629.3" width="130.5" height="32.2" rx="1.2" fill="#b67353"/><rect x="471.2" y="629.3" width="130.5" height="32.2" rx="1.2" fill="#b26f4f"/><rect x="604.4" y="629.3" width="62.6" height="32.2" rx="1.2" fill="#b26f4f"/></g></svg>
<svg class="i" style="left:3px;top:68px" width="8" height="6" viewBox="0 0 8 6" ><path d="M0.8 0.3L3.2 2.7L0.8 5.1M5 0.3L7.4 2.7L5 5.1" fill="none" stroke="#b4b4b4" stroke-width="1.4"/></svg>
<svg class="i" style="left:1537px;top:68px" width="8" height="6" viewBox="0 0 8 6" ><path d="M3.2 0.3L0.8 2.7L3.2 5.1M7.4 0.3L5 2.7L7.4 5.1" fill="none" stroke="#b4b4b4" stroke-width="1.4"/></svg>
<svg class="i" style="left:1823px;top:68px" width="8" height="6" viewBox="0 0 8 6" ><path d="M0.8 0.3L3.2 2.7L0.8 5.1M5 0.3L7.4 2.7L5 5.1" fill="none" stroke="#b4b4b4" stroke-width="1.4"/></svg>
<svg class="i" style="left:1903px;top:68px" width="8" height="6" viewBox="0 0 8 6" ><path d="M3.2 0.3L0.8 2.7L3.2 5.1M7.4 0.3L5 2.7L7.4 5.1" fill="none" stroke="#b4b4b4" stroke-width="1.4"/></svg>
<svg class="i" style="left:7px;top:80px" width="20" height="4" viewBox="0 0 20 4" ><rect x="0" y="0" width="1" height="4" fill="#4a4a4a"/><rect x="2" y="0" width="1" height="4" fill="#4a4a4a"/><rect x="4" y="0" width="1" height="4" fill="#4a4a4a"/><rect x="6" y="0" width="1" height="4" fill="#4a4a4a"/><rect x="8" y="0" width="1" height="4" fill="#4a4a4a"/><rect x="10" y="0" width="1" height="4" fill="#4a4a4a"/><rect x="12" y="0" width="1" height="4" fill="#4a4a4a"/><rect x="14" y="0" width="1" height="4" fill="#4a4a4a"/><rect x="16" y="0" width="1" height="4" fill="#4a4a4a"/><rect x="18" y="0" width="1" height="4" fill="#4a4a4a"/></svg>
<svg class="i" style="left:1522px;top:80px" width="20" height="4" viewBox="0 0 20 4" ><rect x="0" y="0" width="1" height="4" fill="#4a4a4a"/><rect x="2" y="0" width="1" height="4" fill="#4a4a4a"/><rect x="4" y="0" width="1" height="4" fill="#4a4a4a"/><rect x="6" y="0" width="1" height="4" fill="#4a4a4a"/><rect x="8" y="0" width="1" height="4" fill="#4a4a4a"/><rect x="10" y="0" width="1" height="4" fill="#4a4a4a"/><rect x="12" y="0" width="1" height="4" fill="#4a4a4a"/><rect x="14" y="0" width="1" height="4" fill="#4a4a4a"/><rect x="16" y="0" width="1" height="4" fill="#4a4a4a"/><rect x="18" y="0" width="1" height="4" fill="#4a4a4a"/></svg>
<svg class="i" style="left:1522px;top:149px" width="20" height="4" viewBox="0 0 20 4" ><rect x="0" y="0" width="1" height="4" fill="#4a4a4a"/><rect x="2" y="0" width="1" height="4" fill="#4a4a4a"/><rect x="4" y="0" width="1" height="4" fill="#4a4a4a"/><rect x="6" y="0" width="1" height="4" fill="#4a4a4a"/><rect x="8" y="0" width="1" height="4" fill="#4a4a4a"/><rect x="10" y="0" width="1" height="4" fill="#4a4a4a"/><rect x="12" y="0" width="1" height="4" fill="#4a4a4a"/><rect x="14" y="0" width="1" height="4" fill="#4a4a4a"/><rect x="16" y="0" width="1" height="4" fill="#4a4a4a"/><rect x="18" y="0" width="1" height="4" fill="#4a4a4a"/></svg>
<svg class="i" style="left:1522px;top:218px" width="20" height="4" viewBox="0 0 20 4" ><rect x="0" y="0" width="1" height="4" fill="#4a4a4a"/><rect x="2" y="0" width="1" height="4" fill="#4a4a4a"/><rect x="4" y="0" width="1" height="4" fill="#4a4a4a"/><rect x="6" y="0" width="1" height="4" fill="#4a4a4a"/><rect x="8" y="0" width="1" height="4" fill="#4a4a4a"/><rect x="10" y="0" width="1" height="4" fill="#4a4a4a"/><rect x="12" y="0" width="1" height="4" fill="#4a4a4a"/><rect x="14" y="0" width="1" height="4" fill="#4a4a4a"/><rect x="16" y="0" width="1" height="4" fill="#4a4a4a"/><rect x="18" y="0" width="1" height="4" fill="#4a4a4a"/></svg>
<svg class="i" style="left:1868px;top:80px" width="20" height="4" viewBox="0 0 20 4" ><rect x="0" y="0" width="1" height="4" fill="#4a4a4a"/><rect x="2" y="0" width="1" height="4" fill="#4a4a4a"/><rect x="4" y="0" width="1" height="4" fill="#4a4a4a"/><rect x="6" y="0" width="1" height="4" fill="#4a4a4a"/><rect x="8" y="0" width="1" height="4" fill="#4a4a4a"/><rect x="10" y="0" width="1" height="4" fill="#4a4a4a"/><rect x="12" y="0" width="1" height="4" fill="#4a4a4a"/><rect x="14" y="0" width="1" height="4" fill="#4a4a4a"/><rect x="16" y="0" width="1" height="4" fill="#4a4a4a"/><rect x="18" y="0" width="1" height="4" fill="#4a4a4a"/></svg>
<svg class="i" style="left:1868px;top:121px" width="20" height="4" viewBox="0 0 20 4" ><rect x="0" y="0" width="1" height="4" fill="#4a4a4a"/><rect x="2" y="0" width="1" height="4" fill="#4a4a4a"/><rect x="4" y="0" width="1" height="4" fill="#4a4a4a"/><rect x="6" y="0" width="1" height="4" fill="#4a4a4a"/><rect x="8" y="0" width="1" height="4" fill="#4a4a4a"/><rect x="10" y="0" width="1" height="4" fill="#4a4a4a"/><rect x="12" y="0" width="1" height="4" fill="#4a4a4a"/><rect x="14" y="0" width="1" height="4" fill="#4a4a4a"/><rect x="16" y="0" width="1" height="4" fill="#4a4a4a"/><rect x="18" y="0" width="1" height="4" fill="#4a4a4a"/></svg>
<div style="left:1513px;top:145px;width:37px;height:2px;background:#262626;"></div>
<div style="left:1513px;top:214px;width:37px;height:2px;background:#262626;"></div>
<div style="left:1513px;top:256px;width:37px;height:2px;background:#262626;"></div>
<div style="left:1840px;top:116px;width:76px;height:2px;background:#262626;"></div>
<div style="left:1840px;top:157px;width:76px;height:2px;background:#262626;"></div>
<span class="t" style="left:1877px;top:93px;font-size:12px;line-height:16px;color:#d0d0d0;">学习</span>
<span class="t" style="left:1877px;top:134px;font-size:12px;line-height:16px;color:#d0d0d0;">库</span>
<div style="left:1553px;top:77px;width:284px;height:28px;background:#282828;"></div>
<div style="left:1553px;top:77px;width:43px;height:28px;background:#323232;"></div>
<div style="left:1553px;top:105px;width:284px;height:280px;background:#323232;"></div>
<div style="left:1553px;top:385px;width:284px;height:3px;background:#232323;"></div>
<span class="t" style="left:1563px;top:83px;font-size:12px;line-height:16px;color:#e0e0e0;">颜色</span>
<svg class="i" style="left:1821px;top:87px" width="10" height="8" viewBox="0 0 10 8" ><path d="M0 .5H10M0 2.5H10M0 4.5H10M0 6.5H10" stroke="#9a9a9a" stroke-width="1" fill="none"/></svg>
<div style="left:1573px;top:128px;width:19px;height:19px;background:#5b2170;border:1px solid #f0f0f0;"></div>
<div style="left:1561px;top:116px;width:22px;height:22px;background:#050505;border:1px solid #6a6a6a;box-shadow:inset 0 0 0 1px #f4f4f4;"></div>
<span class="t" style="left:1600px;top:118px;font-size:11px;line-height:16px;color:#9a9a9a;">H</span>
<span class="t" style="left:1600px;top:144px;font-size:11px;line-height:16px;color:#9a9a9a;">S</span>
<span class="t" style="left:1600px;top:170px;font-size:11px;line-height:16px;color:#9a9a9a;">B</span>
<div style="left:1615px;top:119px;width:144px;height:6px;background:linear-gradient(90deg,#f00 0%,#ff0 16.66%,#0f0 33.33%,#0ff 50%,#00f 66.66%,#f0f 83.33%,#f00 100%);"></div>
<div style="left:1615px;top:145px;width:144px;height:6px;background:#050505;"></div>
<div style="left:1615px;top:171px;width:144px;height:6px;background:linear-gradient(90deg,#000,#fff);"></div>
<svg class="i" style="left:1671px;top:126.5px" width="10" height="10" viewBox="0 0 10 10" ><path d="M5 0.5L9.3 6V8.2Q9.3 9.5 8 9.5H2Q0.7 9.5 0.7 8.2V6Z" fill="#e6e6e6"/></svg>
<svg class="i" style="left:1612px;top:152.5px" width="10" height="10" viewBox="0 0 10 10" ><path d="M5 0.5L9.3 6V8.2Q9.3 9.5 8 9.5H2Q0.7 9.5 0.7 8.2V6Z" fill="#e6e6e6"/></svg>
<svg class="i" style="left:1614px;top:178.5px" width="10" height="10" viewBox="0 0 10 10" ><path d="M5 0.5L9.3 6V8.2Q9.3 9.5 8 9.5H2Q0.7 9.5 0.7 8.2V6Z" fill="#e6e6e6"/></svg>
<div style="left:1764px;top:115px;width:41px;height:21px;border:1px solid #484848;background:#2a2a2a;"></div>
<span class="t" style="left:1768px;top:118px;font-size:11px;line-height:16px;color:#dcdcdc;">154</span>
<span class="t" style="left:1810px;top:119px;font-size:13px;line-height:16px;color:#9a9a9a;">°</span>
<div style="left:1764px;top:141px;width:41px;height:21px;border:1px solid #484848;background:#2a2a2a;"></div>
<span class="t" style="left:1768px;top:144px;font-size:11px;line-height:16px;color:#dcdcdc;">1</span>
<span class="t" style="left:1808px;top:144px;font-size:11px;line-height:16px;color:#9a9a9a;">%</span>
<div style="left:1764px;top:167px;width:41px;height:21px;border:1px solid #484848;background:#2a2a2a;"></div>
<span class="t" style="left:1768px;top:170px;font-size:11px;line-height:16px;color:#dcdcdc;">2</span>
<span class="t" style="left:1808px;top:170px;font-size:11px;line-height:16px;color:#9a9a9a;">%</span>
<div style="left:1609.5px;top:201.0px;width:171px;height:171px;border-radius:50%;background:conic-gradient(from 90deg,#f00,#f0f,#00f,#0ff,#0f0,#ff0,#f00);-webkit-mask:radial-gradient(circle,transparent 65.8px,#000 66.6px);mask:radial-gradient(circle,transparent 65.8px,#000 66.6px);"></div>
<svg class="i" style="left:1662px;top:230.2px" width="98" height="113" viewBox="0 0 98 113" ><defs>
<linearGradient id="tgw" gradientUnits="userSpaceOnUse" x1="0" y1="0" x2="48.75" y2="84.45"><stop offset="0" stop-color="#fff"/><stop offset="1" stop-color="#000"/></linearGradient>
<linearGradient id="tgh" gradientUnits="userSpaceOnUse" x1="0" y1="0" x2="98" y2="0"><stop offset="0" stop-color="#000"/><stop offset="1" stop-color="#00ff91"/></linearGradient>
</defs>
<g style="isolation:isolate"><path d="M0 0L98 56.3L0 112.6Z" fill="url(#tgw)"/>
<path d="M0 0L98 56.3L0 112.6Z" fill="url(#tgh)" style="mix-blend-mode:plus-lighter"/></g></svg>
<svg class="i" style="left:1619px;top:245px" width="16" height="16" viewBox="0 0 16 16" ><circle cx="7.4" cy="7.5" r="5.2" fill="none" stroke="#0a0a0a" stroke-width="1"/></svg>
<svg class="i" style="left:1655px;top:333px" width="16" height="16" viewBox="0 0 16 16" ><circle cx="7.3" cy="7.3" r="5.2" fill="none" stroke="#fff" stroke-width="1.2"/></svg>
<svg class="i" style="left:1805px;top:354px" width="12" height="12" viewBox="0 0 12 12" ><path d="M1.5 1.5H9.5V9.5H5L1.5 6Z" fill="none" stroke="#c8c8c8" stroke-width="1.2"/><path d="M1.5 6H5V9.5" fill="none" stroke="#c8c8c8" stroke-width="1"/></svg>
<div style="left:1553px;top:388px;width:284px;height:28px;background:#282828;"></div>
<div style="left:1553px;top:388px;width:67px;height:28px;background:#323232;"></div>
<div style="left:1620px;top:388px;width:1px;height:27px;background:#333;"></div>
<div style="left:1664px;top:388px;width:1px;height:27px;background:#333;"></div>
<div style="left:1708px;top:388px;width:1px;height:27px;background:#333;"></div>
<span class="t" style="left:1563px;top:394px;font-size:12px;line-height:16px;color:#e0e0e0;">历史记录</span>
<span class="t" style="left:1630px;top:394px;font-size:12px;line-height:16px;color:#8c8c8c;">动作</span>
<span class="t" style="left:1674px;top:394px;font-size:12px;line-height:16px;color:#8c8c8c;">色板</span>
<svg class="i" style="left:1821px;top:398px" width="10" height="8" viewBox="0 0 10 8" ><path d="M0 .5H10M0 2.5H10M0 4.5H10M0 6.5H10" stroke="#9a9a9a" stroke-width="1" fill="none"/></svg>
<div style="left:1553px;top:416px;width:284px;height:255px;background:#282828;"></div>
<div style="left:1553px;top:416px;width:284px;height:5px;background:#323232;"></div>
<div style="left:1821px;top:421px;width:16px;height:250px;background:#2b2b2b;"></div>
<div style="left:1553px;top:421px;width:268px;height:38px;background:#323232;"></div>
<div style="left:1553px;top:459px;width:268px;height:3px;background:#262626;"></div>
<div style="left:1553px;top:462px;width:268px;height:22px;background:#4b4b4b;"></div>
<span class="t" style="left:1615px;top:431px;font-size:11px;line-height:16px;color:#c4c4c4;">6f0a7d5e92d0b535391c8231ac3ce6b...</span>
<span class="t" style="left:1612px;top:465px;font-size:12px;line-height:16px;color:#e6e6e6;">打开</span>
<div style="left:1559px;top:467px;width:12px;height:12px;border-top:1px solid #2c2c2c;border-left:1px solid #2c2c2c;background:#484848;"></div>
<svg class="i" style="left:1578px;top:423px" width="32" height="32" viewBox="0 0 32 32" ><rect width="32" height="32" fill="#3a2218"/><rect x="1" y="1.00" width="10.2" height="2.7" fill="#9a5f44"/><rect x="11.2" y="1.00" width="10.2" height="2.7" fill="#a8694a"/><rect x="21.4" y="1.00" width="9.6" height="2.7" fill="#9a5f44"/><rect x="1" y="4.45" width="4.8" height="2.7" fill="#a8694a"/><rect x="6.8" y="4.45" width="10" height="2.7" fill="#87523d"/><rect x="17.8" y="4.45" width="10" height="2.7" fill="#a8694a"/><rect x="28.8" y="4.45" width="2.2" height="2.7" fill="#9a5f44"/><rect x="1" y="7.90" width="10.2" height="2.7" fill="#9a5f44"/><rect x="11.2" y="7.90" width="10.2" height="2.7" fill="#a8694a"/><rect x="21.4" y="7.90" width="9.6" height="2.7" fill="#9a5f44"/><rect x="1" y="11.35" width="4.8" height="2.7" fill="#87523d"/><rect x="6.8" y="11.35" width="10" height="2.7" fill="#9a5f44"/><rect x="17.8" y="11.35" width="10" height="2.7" fill="#a8694a"/><rect x="28.8" y="11.35" width="2.2" height="2.7" fill="#9a5f44"/><rect x="1" y="14.80" width="10.2" height="2.7" fill="#a8694a"/><rect x="11.2" y="14.80" width="10.2" height="2.7" fill="#9a5f44"/><rect x="21.4" y="14.80" width="9.6" height="2.7" fill="#87523d"/><rect x="1" y="18.25" width="4.8" height="2.7" fill="#9a5f44"/><rect x="6.8" y="18.25" width="10" height="2.7" fill="#a8694a"/><rect x="17.8" y="18.25" width="10" height="2.7" fill="#9a5f44"/><rect x="28.8" y="18.25" width="2.2" height="2.7" fill="#a8694a"/><rect x="1" y="21.70" width="10.2" height="2.7" fill="#a8694a"/><rect x="11.2" y="21.70" width="10.2" height="2.7" fill="#9a5f44"/><rect x="21.4" y="21.70" width="9.6" height="2.7" fill="#a8694a"/><rect x="1" y="25.15" width="4.8" height="2.7" fill="#9a5f44"/><rect x="6.8" y="25.15" width="10" height="2.7" fill="#87523d"/><rect x="17.8" y="25.15" width="10" height="2.7" fill="#9a5f44"/><rect x="28.8" y="25.15" width="2.2" height="2.7" fill="#a8694a"/><rect x="1" y="28.60" width="10.2" height="2.7" fill="#a8694a"/><rect x="11.2" y="28.60" width="10.2" height="2.7" fill="#9a5f44"/><rect x="21.4" y="28.60" width="9.6" height="2.7" fill="#a8694a"/><rect x="0.5" y="0.5" width="31" height="31" fill="none" stroke="#6a6a6a"/></svg>
<div style="left:1553px;top:672px;width:284px;height:24px;background:#323232;"></div>
<div style="left:1553px;top:696px;width:284px;height:2px;background:#232323;"></div>
<div style="left:1553px;top:698px;width:284px;height:29px;background:#282828;"></div>
<div style="left:1553px;top:698px;width:44px;height:29px;background:#323232;"></div>
<span class="t" style="left:1563px;top:705px;font-size:12px;line-height:16px;color:#e0e0e0;">属性</span>
<svg class="i" style="left:1821px;top:709px" width="10" height="8" viewBox="0 0 10 8" ><path d="M0 .5H10M0 2.5H10M0 4.5H10M0 6.5H10" stroke="#9a9a9a" stroke-width="1" fill="none"/></svg>
<div style="left:1553px;top:727px;width:284px;height:280px;background:#323232;"></div>
<div style="left:1553px;top:760px;width:284px;height:1px;background:#262626;"></div>
<div style="left:1563px;top:732px;width:24px;height:23px;background:#1f1f1f;border-radius:3px;"></div>
<span class="t" style="left:1593px;top:737px;font-size:12px;line-height:16px;color:#d0d0d0;">文档属性</span>
<div style="left:1821px;top:762px;width:16px;height:220px;background:#282828;"></div>
<span class="t" style="left:1565px;top:770px;font-size:11px;line-height:16px;color:#a8a8a8;">W:</span>
<span class="t" style="left:1586px;top:770px;font-size:11px;line-height:16px;color:#a8a8a8;">35.28</span>
<span class="t" style="left:1619px;top:769px;font-size:11px;line-height:16px;color:#a8a8a8;">厘米</span>
<span class="t" style="left:1684px;top:770px;font-size:11px;line-height:16px;color:#a8a8a8;">H:</span>
<span class="t" style="left:1703px;top:770px;font-size:11px;line-height:16px;color:#a8a8a8;">35.28</span>
<span class="t" style="left:1736px;top:769px;font-size:11px;line-height:16px;color:#a8a8a8;">厘米</span>
<span class="t" style="left:1569px;top:793px;font-size:11px;line-height:16px;color:#a8a8a8;">X:</span>
<span class="t" style="left:1586px;top:793px;font-size:11px;line-height:16px;color:#a8a8a8;">0</span>
<span class="t" style="left:1685px;top:793px;font-size:11px;line-height:16px;color:#a8a8a8;">Y:</span>
<span class="t" style="left:1702px;top:793px;font-size:11px;line-height:16px;color:#a8a8a8;">0</span>
<span class="t" style="left:1562px;top:827px;font-size:11.5px;line-height:16px;color:#a8a8a8;">分辨率 : 72 像素 /英寸</span>
<div style="left:1553px;top:1007px;width:284px;height:3px;background:#232323;"></div>
<div style="left:1553px;top:1010px;width:284px;height:24px;background:#282828;"></div>
<div style="left:1553px;top:1010px;width:44px;height:24px;background:#323232;"></div>
<div style="left:1641px;top:1010px;width:1px;height:24px;background:#333;"></div>
<div style="left:1686px;top:1010px;width:1px;height:24px;background:#333;"></div>
<span class="t" style="left:1563px;top:1016px;font-size:12px;line-height:16px;color:#e0e0e0;">图层</span>
<span class="t" style="left:1607px;top:1016px;font-size:12px;line-height:16px;color:#8c8c8c;">通道</span>
<span class="t" style="left:1651px;top:1016px;font-size:12px;line-height:16px;color:#8c8c8c;">路径</span>
<svg class="i" style="left:1821px;top:1020px" width="10" height="8" viewBox="0 0 10 8" ><path d="M0 .5H10M0 2.5H10M0 4.5H10M0 6.5H10" stroke="#9a9a9a" stroke-width="1" fill="none"/></svg>
<div style="left:1760px;top:988px;width:160px;height:25px;background:#ffffff;border:1px solid #b9d3f5;border-radius:4px;"></div>
<svg class="i" style="left:1738px;top:982px" width="36" height="34" viewBox="0 0 36 34" ><defs><linearGradient id="sg" x1="0" y1="0" x2="0" y2="1"><stop offset="0" stop-color="#f4742f"/><stop offset="1" stop-color="#ea4a1c"/></linearGradient></defs><g transform="rotate(-16 17 17)"><rect x="4" y="4.5" width="27" height="26" rx="4" fill="url(#sg)"/><text x="17.5" y="27.5" text-anchor="middle" font-family="Liberation Sans, sans-serif" font-size="27" font-weight="bold" font-style="italic" fill="#ffffff" transform="translate(17.5 17) scale(1.25 0.95) translate(-17.5 -17)">S</text></g></svg>
<span class="t" style="left:1775px;top:991px;font-size:16px;line-height:20px;color:#1278e0;font-weight:bold;">中</span>
<span class="t" style="left:1730px;top:1007px;font-size:16.65px;line-height:20px;color:rgba(228,228,228,.88);text-shadow:0 0 1.5px rgba(50,50,50,.95),0 0 1px rgba(50,50,50,.8);">CSDN @qq_21315789</span>
<div style="left:1px;top:94px;width:31px;height:24px;background:#1f1f1f;border-radius:3px;"></div>
<svg class="i" style="left:7px;top:96.5px" width="24" height="20" viewBox="0 0 24 20" ><g transform="translate(-0.5 0)"><path d="M10 2.2L13 5.6H10.9V9.1H14.4V7L17.8 10L14.4 13V10.9H10.9V14.4H13L10 17.8L7 14.4H9.1V10.9H5.6V13L2.2 10L5.6 7V9.1H9.1V5.6H7Z" fill="#d8d8d8"/></g><path d="M22 16V19.2H18.8Z" fill="#c0c0c0"/></svg>
<svg class="i" style="left:7px;top:122px" width="24" height="20" viewBox="0 0 24 20" ><rect x="2.5" y="3.5" width="15" height="12" fill="none" stroke="#d8d8d8" stroke-width="1.3" stroke-dasharray="3.2 2.2"/><path d="M22 16V19.2H18.8Z" fill="#c0c0c0"/></svg>
<svg class="i" style="left:7px;top:148px" width="24" height="20" viewBox="0 0 24 20" ><path d="M2.5 4.5L10.5 9.5L17 3L17.5 11L8.5 14.5Z" fill="none" stroke="#d8d8d8" stroke-width="1.2" stroke-linejoin="round"/><circle cx="8" cy="14" r="1.8" fill="#323232" stroke="#d8d8d8" stroke-width="1.1"/><path d="M6.8 15.2L3 17.5M8.8 15.8L10 18.5" stroke="#d8d8d8" stroke-width="1.1" fill="none"/><path d="M22 16V19.2H18.8Z" fill="#c0c0c0"/></svg>
<svg class="i" style="left:7px;top:174px" width="24" height="20" viewBox="0 0 24 20" ><path d="M3.2 16.8L11.5 7.5" stroke="#d8d8d8" stroke-width="3.2" stroke-linecap="round"/><path d="M10.2 9.2L11.4 7.8" stroke="#323232" stroke-width="1.2" stroke-linecap="round"/><path d="M8.5 1.5V5M6.8 3.2H10.2M16.5 1.2V5.4M14.4 3.3H18.6M17 7.2V10.4M15.4 8.8H18.6" stroke="#d8d8d8" stroke-width="1" fill="none"/><path d="M22 16V19.2H18.8Z" fill="#c0c0c0"/></svg>
<svg class="i" style="left:7px;top:200px" width="24" height="20" viewBox="0 0 24 20" ><path d="M5 0.8V13.4H17.6M0.6 4.6H13.6V17.6" fill="none" stroke="#d8d8d8" stroke-width="2"/><path d="M0 4.6H2M17.5 13.4H19.6" stroke="#d8d8d8" stroke-width="2"/><path d="M22 16V19.2H18.8Z" fill="#c0c0c0"/></svg>
<svg class="i" style="left:7px;top:226px" width="24" height="20" viewBox="0 0 24 20" ><rect x="2.5" y="3" width="15.5" height="13" fill="none" stroke="#d8d8d8" stroke-width="1.3"/><path d="M2.5 3L18 16M18 3L2.5 16" stroke="#d8d8d8" stroke-width="1.2"/><g fill="#d8d8d8"><circle cx="2.5" cy="3" r="1.2"/><circle cx="18" cy="3" r="1.2"/><circle cx="2.5" cy="16" r="1.2"/><circle cx="18" cy="16" r="1.2"/></g></svg>
<svg class="i" style="left:7px;top:252px" width="24" height="20" viewBox="0 0 24 20" ><path d="M11.2 5.8L3.4 13.6Q2.2 15 3 16.4Q4.4 17.4 5.8 16L13.6 8.2" fill="none" stroke="#d8d8d8" stroke-width="1.4"/><path d="M9.6 4.4L15 9.8" stroke="#d8d8d8" stroke-width="2.2" stroke-linecap="round"/><path d="M12.4 7L16 3.4" stroke="#d8d8d8" stroke-width="3.6" stroke-linecap="round"/><path d="M22 16V19.2H18.8Z" fill="#c0c0c0"/></svg>
<svg class="i" style="left:7px;top:278px" width="24" height="20" viewBox="0 0 24 20" ><g transform="rotate(-38 10 10)"><rect x="0.8" y="6.2" width="18.4" height="7.6" rx="2.2" fill="#d8d8d8"/><rect x="6.4" y="6.2" width="7.2" height="7.6" fill="#323232"/><rect x="6.9" y="6.2" width="6.2" height="7.6" fill="#d8d8d8"/><g fill="#323232"><rect x="8" y="7.6" width="1.5" height="1.5"/><rect x="10.6" y="7.6" width="1.5" height="1.5"/><rect x="8" y="10.6" width="1.5" height="1.5"/><rect x="10.6" y="10.6" width="1.5" height="1.5"/></g></g><path d="M22 16V19.2H18.8Z" fill="#c0c0c0"/></svg>
<svg class="i" style="left:7px;top:304px" width="24" height="20" viewBox="0 0 24 20" ><path d="M17.4 1.8Q18.8 2.4 17.8 4.2L12.2 12L9.6 10L15.6 2.6Q16.4 1.5 17.4 1.8Z" fill="#d8d8d8"/><path d="M8.8 10.8L11.4 12.8Q11.2 16.4 7.6 17.3Q4.4 17.9 1.8 16.9Q4.4 15.7 4.8 13.5Q5.6 10.4 8.8 10.8Z" fill="#d8d8d8"/><path d="M22 16V19.2H18.8Z" fill="#c0c0c0"/></svg>
<svg class="i" style="left:7px;top:330px" width="24" height="20" viewBox="0 0 24 20" ><circle cx="10" cy="5.2" r="3.3" fill="#d8d8d8"/><path d="M8.6 7.5H11.4L12 11.4H8Z" fill="#d8d8d8"/><rect x="3.6" y="11" width="12.8" height="3.4" rx="0.8" fill="#d8d8d8"/><rect x="3.6" y="15.6" width="12.8" height="1.4" fill="#d8d8d8"/><path d="M22 16V19.2H18.8Z" fill="#c0c0c0"/></svg>
<svg class="i" style="left:7px;top:356px" width="24" height="20" viewBox="0 0 24 20" ><path d="M17.4 1.6Q18.3 2 17.6 3.4L12.2 11.6L10.2 10.2L15.9 2.2Q16.6 1.3 17.4 1.6Z" fill="#d8d8d8"/><path d="M9.5 11.2L11.4 12.7Q11.2 15.8 8.2 16.7Q5.6 17.3 3.6 16.4Q5.6 15.4 6 13.6Q6.8 10.9 9.5 11.2Z" fill="#d8d8d8"/><path d="M1.2 6.4L5.2 3.4V5.4H10.6V7.2H5.2V9.2Z" fill="#d8d8d8"/><path d="M16.4 8.4Q17.2 12 13.6 14.6" fill="none" stroke="#d8d8d8" stroke-width="1" stroke-dasharray="1 1.4"/><path d="M22 16V19.2H18.8Z" fill="#c0c0c0"/></svg>
<svg class="i" style="left:7px;top:382px" width="24" height="20" viewBox="0 0 24 20" ><path d="M11.6 2.4L17.4 6.6L10.2 15.4L3 15.6L2.6 11.4Z" fill="#d8d8d8"/><path d="M3.2 11.8L8.8 15.2L6.4 15.8L2.8 14.6Z" fill="#323232"/><path d="M2.4 12L3 15.4L7.6 16.2L9.8 14.8L4 11Z" fill="none" stroke="#d8d8d8" stroke-width="1"/><path d="M7 16.5H17.5" stroke="#d8d8d8" stroke-width="1.2"/><path d="M22 16V19.2H18.8Z" fill="#c0c0c0"/></svg>
<svg class="i" style="left:7px;top:408px" width="24" height="20" viewBox="0 0 24 20" ><path d="M9.4 3.4L16.2 10L8.6 17.6L2 11Z" fill="none" stroke="#d8d8d8" stroke-width="1.4" stroke-linejoin="round"/><path d="M9.6 8L6 2.6Q5.4 1.2 6.6 1.2Q7.6 1.4 8.4 2.8L10.8 7.6" fill="none" stroke="#d8d8d8" stroke-width="1.1"/><circle cx="10.3" cy="8.3" r="1.4" fill="#d8d8d8"/><path d="M17.6 10.8Q20.6 14.6 18.4 15.9Q16 16.4 16 14Q16.2 12.4 17.6 10.8Z" fill="#d8d8d8"/><path d="M22 16V19.2H18.8Z" fill="#c0c0c0"/></svg>
<svg class="i" style="left:7px;top:434px" width="24" height="20" viewBox="0 0 24 20" ><path d="M5 8.4Q4.8 3.2 10 2.8H15.4Q18 3 17.8 7Q17.6 11.8 14.8 14.2L12.2 14.8Q13.2 12.6 13 10.6L6.8 17.2Q5.6 18 4.6 17Q3.8 15.8 5 14.6L8.6 10.4Q7 12.4 5.8 11.8Q5 10.8 5 8.4Z" fill="#d8d8d8"/><path d="M7.6 12.6Q9.2 10.6 9.6 8" stroke="#323232" stroke-width="1" fill="none"/><path d="M11.8 15Q14.6 12.4 15.4 8.8" stroke="#323232" stroke-width="1" fill="none"/><path d="M22 16V19.2H18.8Z" fill="#c0c0c0"/></svg>
<svg class="i" style="left:7px;top:460px" width="24" height="20" viewBox="0 0 24 20" ><circle cx="12.2" cy="7.2" r="5.1" fill="#d8d8d8"/><path d="M8.6 10.6L2.6 16.8" stroke="#d8d8d8" stroke-width="1.8" stroke-linecap="round"/><path d="M22 16V19.2H18.8Z" fill="#c0c0c0"/></svg>
<svg class="i" style="left:7px;top:486px" width="24" height="20" viewBox="0 0 24 20" ><path d="M11.4 5.2L15.6 9.4L13.4 14.2L4 17.6L3.2 16.8L6.6 7.4Z" fill="none" stroke="#d8d8d8" stroke-width="1.3" stroke-linejoin="round"/><path d="M3.8 17L9 11.8" stroke="#d8d8d8" stroke-width="1.1"/><circle cx="9.6" cy="11.2" r="1.5" fill="#d8d8d8"/><path d="M12.2 4.6L14.6 2.2L18.6 6.2L16.2 8.6Z" fill="#d8d8d8"/><path d="M22 16V19.2H18.8Z" fill="#c0c0c0"/></svg>
<svg class="i" style="left:7px;top:512px" width="24" height="20" viewBox="0 0 24 20" ><path d="M3.6 3H16.4V6.6H15V4.8H11.2V15.2H13.2V16.8H6.8V15.2H8.8V4.8H5V6.6H3.6Z" fill="#d8d8d8"/><path d="M22 16V19.2H18.8Z" fill="#c0c0c0"/></svg>
<svg class="i" style="left:7px;top:538px" width="24" height="20" viewBox="0 0 24 20" ><path d="M5 2.2V16.2L8.6 12.8L10.8 17.8L13 16.8L10.8 12H15.4Z" fill="#d8d8d8"/><path d="M22 16V19.2H18.8Z" fill="#c0c0c0"/></svg>
<svg class="i" style="left:7px;top:564px" width="24" height="20" viewBox="0 0 24 20" ><rect x="2" y="3.5" width="16" height="13" fill="#5e5e5e" stroke="#d8d8d8" stroke-width="1.2"/><path d="M22 16V19.2H18.8Z" fill="#c0c0c0"/></svg>
<svg class="i" style="left:7px;top:591px" width="24" height="20" viewBox="0 0 24 20" ><path d="M6.2 17.6Q3.4 14 1.8 10.8Q1.4 9.6 2.4 9.2Q3.4 9 4.2 10.2L5.6 12.2V4.6Q5.6 3.4 6.6 3.4Q7.6 3.4 7.6 4.6V3Q7.6 1.8 8.7 1.8Q9.8 1.8 9.8 3V3.6Q9.8 2.4 10.9 2.4Q12 2.4 12 3.6V5Q12 3.9 13 3.9Q14 3.9 14 5V12Q14 15.6 12.6 17.6Z" fill="#d8d8d8"/><path d="M7.6 4.6V9.6M9.8 3.6V9.6M12 5V9.6" stroke="#323232" stroke-width="0.9"/><path d="M22 16V19.2H18.8Z" fill="#c0c0c0"/></svg>
<svg class="i" style="left:7px;top:616px" width="24" height="20" viewBox="0 0 24 20" ><circle cx="8.2" cy="8" r="5.6" fill="none" stroke="#d8d8d8" stroke-width="1.6"/><path d="M12.4 12.2L17.6 17.4" stroke="#d8d8d8" stroke-width="2.4" stroke-linecap="round"/><path d="M5 7.4Q5.6 5 8 4.6" stroke="#d8d8d8" stroke-width="0.9" fill="none"/></svg>
<svg class="i" style="left:7px;top:642px" width="24" height="20" viewBox="0 0 24 20" ><circle cx="4" cy="10" r="1.8" fill="#d8d8d8"/><circle cx="10" cy="10" r="1.8" fill="#d8d8d8"/><circle cx="16" cy="10" r="1.8" fill="#d8d8d8"/><path d="M22 16V19.2H18.8Z" fill="#c0c0c0"/></svg>
<svg class="i" style="left:2px;top:670px" width="12" height="12" viewBox="0 0 12 12" ><rect x="3.5" y="3.5" width="7" height="7" fill="#d8d8d8"/><rect x="0.5" y="0.5" width="7" height="7" fill="#0a0a0a" stroke="#d8d8d8"/></svg>
<svg class="i" style="left:19px;top:670px" width="12" height="12" viewBox="0 0 12 12" ><path d="M3 3H8.5V8" fill="none" stroke="#d8d8d8" stroke-width="1.4"/><path d="M0 3L4 0V6ZM8.5 11L5.5 7H11.5Z" fill="#d8d8d8"/></svg>
<div style="left:12px;top:697px;width:19px;height:19px;background:#5b2170;border:1px solid #f0f0f0;box-shadow:0 0 0 1px #2a2a2a;"></div>
<div style="left:1px;top:687px;width:20px;height:19px;background:#050505;border:1px solid #f4f4f4;box-shadow:0 0 0 1px #2a2a2a;"></div>
<svg class="i" style="left:8px;top:727px" width="18" height="14" viewBox="0 0 18 14" ><rect x="0.6" y="0.6" width="16.8" height="12.8" fill="none" stroke="#d8d8d8" stroke-width="1.2"/><circle cx="9" cy="7" r="3.6" fill="none" stroke="#d8d8d8" stroke-width="1" stroke-dasharray="1 1.2"/></svg>
<svg class="i" style="left:8px;top:753px" width="22" height="16" viewBox="0 0 22 16" ><rect x="4.6" y="0.6" width="12.8" height="8.8" fill="none" stroke="#d8d8d8" stroke-width="1.2"/><rect x="0.6" y="4.6" width="10.8" height="7.8" fill="#323232" stroke="#d8d8d8" stroke-width="1.2"/><path d="M21 11V14H18Z" fill="#c0c0c0"/></svg>
<svg class="i" style="left:3px;top:37px" width="3" height="20" viewBox="0 0 3 20" ><rect x="0" y="0" width="3" height="1" fill="#464646"/><rect x="0" y="2" width="3" height="1" fill="#464646"/><rect x="0" y="4" width="3" height="1" fill="#464646"/><rect x="0" y="6" width="3" height="1" fill="#464646"/><rect x="0" y="8" width="3" height="1" fill="#464646"/><rect x="0" y="10" width="3" height="1" fill="#464646"/><rect x="0" y="12" width="3" height="1" fill="#464646"/><rect x="0" y="14" width="3" height="1" fill="#464646"/><rect x="0" y="16" width="3" height="1" fill="#464646"/><rect x="0" y="18" width="3" height="1" fill="#464646"/></svg>
<svg class="i" style="left:16px;top:39px" width="18" height="16" viewBox="0 0 18 16" ><path d="M9 0.8L17.4 8.6H14.8V15H10.8V10.2H7.2V15H3.2V8.6H0.6Z" fill="#d8d8d8"/></svg>
<div style="left:50px;top:34px;width:1px;height:25px;background:#2a2a2a;"></div>
<div style="left:99px;top:34px;width:1px;height:25px;background:#2a2a2a;"></div>
<div style="left:254px;top:34px;width:1px;height:25px;background:#2a2a2a;"></div>
<div style="left:371px;top:34px;width:1px;height:25px;background:#2a2a2a;"></div>
<div style="left:500px;top:34px;width:1px;height:25px;background:#2a2a2a;"></div>
<div style="left:629px;top:34px;width:1px;height:25px;background:#2a2a2a;"></div>
<div style="left:672px;top:34px;width:1px;height:25px;background:#2a2a2a;"></div>
<svg class="i" style="left:57px;top:38px" width="18" height="18" viewBox="0 0 18 18" ><g transform="scale(0.92)"><path d="M10 2.2L13 5.6H10.9V9.1H14.4V7L17.8 10L14.4 13V10.9H10.9V14.4H13L10 17.8L7 14.4H9.1V10.9H5.6V13L2.2 10L5.6 7V9.1H9.1V5.6H7Z" fill="#d8d8d8"/></g></svg>
<svg class="i" style="left:83px;top:45px" width="8" height="5" viewBox="0 0 8 5" ><path d="M0.6 0.6L4 3.8L7.4 0.6" fill="none" stroke="#9a9a9a" stroke-width="1.1"/></svg>
<svg class="i" style="left:234px;top:46px" width="8" height="5" viewBox="0 0 8 5" ><path d="M0.6 0.6L4 3.8L7.4 0.6" fill="none" stroke="#9a9a9a" stroke-width="1.1"/></svg>
<svg class="i" style="left:107px;top:41px" width="12" height="12" viewBox="0 0 12 12" ><rect x="0" y="0" width="12" height="12" rx="2" fill="#d2d2d2"/><path d="M2.6 6.2L5 8.6L9.4 3.4" fill="none" stroke="#2a2a2a" stroke-width="1.7"/></svg>
<svg class="i" style="left:263px;top:41px" width="12" height="12" viewBox="0 0 12 12" ><rect x="0" y="0" width="12" height="12" rx="2" fill="#d2d2d2"/><path d="M2.6 6.2L5 8.6L9.4 3.4" fill="none" stroke="#2a2a2a" stroke-width="1.7"/></svg>
<svg class="i" style="left:387px;top:39px" width="14" height="16" viewBox="0 0 14 16" ><rect x="0" y="0" width="1" height="15" fill="#8e8e8e"/><rect x="2" y="3" width="7" height="4" fill="#8e8e8e"/><rect x="2" y="9" width="11" height="4" fill="#8e8e8e"/></svg>
<svg class="i" style="left:413px;top:39px" width="14" height="16" viewBox="0 0 14 16" ><rect x="6" y="0" width="1" height="15" fill="#8e8e8e"/><rect x="3" y="3" width="7" height="4" fill="#8e8e8e"/><rect x="1" y="9" width="11" height="4" fill="#8e8e8e"/></svg>
<svg class="i" style="left:438px;top:39px" width="14" height="16" viewBox="0 0 14 16" ><rect x="12" y="0" width="1" height="15" fill="#8e8e8e"/><rect x="4" y="3" width="7" height="4" fill="#8e8e8e"/><rect x="0" y="9" width="11" height="4" fill="#8e8e8e"/></svg>
<svg class="i" style="left:471px;top:40px" width="17" height="14" viewBox="0 0 17 14" ><rect x="0" y="0" width="16" height="1" fill="#8e8e8e"/><rect x="3" y="4" width="10" height="4" fill="#8e8e8e"/><rect x="0" y="11" width="16" height="1" fill="#8e8e8e"/></svg>
<svg class="i" style="left:515px;top:40px" width="14" height="16" viewBox="0 0 14 16" ><rect x="0" y="0" width="13" height="1" fill="#8e8e8e"/><rect x="2" y="2" width="4" height="11" fill="#8e8e8e"/><rect x="8" y="2" width="4" height="7" fill="#8e8e8e"/></svg>
<svg class="i" style="left:541px;top:39px" width="15" height="16" viewBox="0 0 15 16" ><rect x="0" y="7" width="15" height="1" fill="#8e8e8e"/><rect x="2" y="2" width="4" height="11" fill="#8e8e8e"/><rect x="9" y="4" width="4" height="7" fill="#8e8e8e"/></svg>
<svg class="i" style="left:567px;top:39px" width="15" height="16" viewBox="0 0 15 16" ><rect x="0" y="14" width="14" height="1" fill="#8e8e8e"/><rect x="2" y="2" width="4" height="11" fill="#8e8e8e"/><rect x="8" y="6" width="4" height="7" fill="#8e8e8e"/></svg>
<svg class="i" style="left:603px;top:39px" width="12" height="16" viewBox="0 0 12 16" ><rect x="0" y="0" width="1" height="15" fill="#8e8e8e"/><rect x="3" y="3" width="4" height="10" fill="#8e8e8e"/><rect x="9" y="0" width="1" height="15" fill="#8e8e8e"/></svg>
<svg class="i" style="left:643px;top:44px" width="16" height="6" viewBox="0 0 16 6" ><circle cx="2.2" cy="3" r="1.9" fill="#d8d8d8"/><circle cx="8" cy="3" r="1.9" fill="#d8d8d8"/><circle cx="13.8" cy="3" r="1.9" fill="#d8d8d8"/></svg>
<svg class="i" style="left:743px;top:38px" width="20" height="18" viewBox="0 0 20 18" ><path d="M4.5 10.5Q1 10 1.4 7.2Q2 4.6 5 5Q6 2 9.4 2.4Q12 2.8 12.6 5.2" fill="none" stroke="#7c7c7c" stroke-width="1.2"/><circle cx="13.6" cy="8.4" r="3.6" fill="none" stroke="#7c7c7c" stroke-width="1.2"/><path d="M3 12.4Q9 16.5 17.5 13" fill="none" stroke="#7c7c7c" stroke-width="1.2"/><path d="M2 10.6L6 11.6L3.4 14.6Z" fill="#7c7c7c"/></svg>
<svg class="i" style="left:770px;top:38px" width="18" height="18" viewBox="0 0 18 18" ><circle cx="9" cy="9.4" r="7.4" fill="none" stroke="#7c7c7c" stroke-width="1.2"/><circle cx="9" cy="9.4" r="3.4" fill="none" stroke="#7c7c7c" stroke-width="1.2"/><path d="M3.2 0.6L7.4 2.2L3.8 4.8Z" fill="#7c7c7c"/><path d="M1 4L4 1" stroke="#323232" stroke-width="1.4"/></svg>
<svg class="i" style="left:796px;top:38px" width="17" height="18" viewBox="0 0 17 18" ><path d="M8.5 0.8L11 3.8H9.4V8H13.4V6.4L16.2 9L13.4 11.6V10H9.4V14.2H11L8.5 17.2L6 14.2H7.6V10H3.6V11.6L0.8 9L3.6 6.4V8H7.6V3.8H6Z" fill="none" stroke="#7c7c7c" stroke-width="1"/></svg>
<svg class="i" style="left:822px;top:38px" width="18" height="18" viewBox="0 0 18 18" ><path d="M9 0.6L12 4H6ZM9 17.4L6 14H12ZM0.6 9L4 6V12ZM17.4 9L14 12V6Z" fill="#7c7c7c"/><circle cx="9" cy="9" r="3" fill="none" stroke="#7c7c7c" stroke-width="1.2"/><path d="M9 4V6M9 12V14M4 9H6M12 9H14" stroke="#7c7c7c" stroke-width="1.2"/></svg>
<svg class="i" style="left:848px;top:40px" width="20" height="14" viewBox="0 0 20 14" ><rect x="0" y="2" width="10.4" height="9" rx="1.2" fill="#7c7c7c"/><path d="M10.4 6.5L14 3V10Z" fill="#7c7c7c"/><path d="M18.6 1.6L15.6 6.5L18.6 11.4" fill="none" stroke="#7c7c7c" stroke-width="1.1"/></svg>
<svg class="i" style="left:1815px;top:39px" width="17" height="17" viewBox="0 0 17 17" ><circle cx="6.8" cy="6.8" r="5.2" fill="none" stroke="#d8d8d8" stroke-width="1.6"/><path d="M10.6 10.8L15.2 15.4" stroke="#d8d8d8" stroke-width="2" stroke-linecap="round"/></svg>
<svg class="i" style="left:1846px;top:41px" width="16" height="13" viewBox="0 0 16 13" ><rect x="0.7" y="0.7" width="14.6" height="11.6" fill="none" stroke="#d8d8d8" stroke-width="1.4"/><path d="M3 3.5H5M3 5.5H5M3 7.5H5" stroke="#d8d8d8" stroke-width="1"/></svg>
<svg class="i" style="left:1871px;top:45px" width="8" height="5" viewBox="0 0 8 5" ><path d="M0.6 0.6L4 3.8L7.4 0.6" fill="none" stroke="#9a9a9a" stroke-width="1.1"/></svg>
<svg class="i" style="left:1890px;top:38px" width="17" height="16" viewBox="0 0 17 16" ><path d="M4.6 6.6H1.2V15H15.2V6.6H11.8" fill="none" stroke="#d8d8d8" stroke-width="1.6"/><path d="M8.2 10.6V3" stroke="#d8d8d8" stroke-width="1.6"/><path d="M4.8 4.4L8.2 0.6L11.6 4.4Z" fill="#d8d8d8"/></svg>
<div style="left:1812px;top:-4px;width:101px;height:23px;border:1px solid #3e3e3e;border-radius:4px;"></div>
<div style="left:1839px;top:0px;width:1px;height:18px;background:#3a3a3a;"></div>
<div style="left:1867px;top:0px;width:1px;height:18px;background:#3a3a3a;"></div>
<svg class="i" style="left:1820px;top:11px" width="10" height="3" viewBox="0 0 10 3" ><rect x="0" y="0" width="10" height="2.4" fill="#9a9a9a"/></svg>
<svg class="i" style="left:1847px;top:5px" width="13" height="10" viewBox="0 0 13 10" ><rect x="3.8" y="0.8" width="8" height="5.4" fill="none" stroke="#9a9a9a" stroke-width="1.6"/><rect x="0.8" y="3.8" width="8" height="5.4" fill="#323232" stroke="#9a9a9a" stroke-width="1.6"/></svg>
<svg class="i" style="left:1884px;top:4px" width="11" height="10" viewBox="0 0 11 10" ><path d="M1 1L10 9M10 1L1 9" stroke="#9a9a9a" stroke-width="2.2"/></svg>
<svg class="i" style="left:398px;top:75px" width="8" height="8" viewBox="0 0 8 8" ><path d="M1 1L7 7M7 1L1 7" stroke="#9a9a9a" stroke-width="1.6"/></svg>
<svg class="i" style="left:259px;top:1026px" width="6" height="9" viewBox="0 0 6 9" ><path d="M1 0.5L5 5L1 9.5" fill="none" stroke="#b0b0b0" stroke-width="1.1"/></svg>
<svg class="i" style="left:1522px;top:91px" width="24" height="20" viewBox="0 0 24 20" ><path d="M0.5 1.6H2.7M4.2 1.6H8.4M0.5 4.8H2.7M4.2 4.8H8.4M0.5 8H2.7M4.2 8H7.6" stroke="#d8d8d8" stroke-width="1.6"/><path d="M21 2.4Q22.4 3.2 21.2 5L15.6 12L13 10L19 3.2Q20 2 21 2.4Z" fill="#d8d8d8"/><path d="M12.2 10.8L14.8 12.8Q14.6 16.4 11 17.4Q7.8 18 5.2 17Q7.8 15.8 8.2 13.6Q9 10.4 12.2 10.8Z" fill="#d8d8d8"/></svg>
<svg class="i" style="left:1522px;top:120px" width="22" height="18" viewBox="0 0 22 18" ><path d="M0.5 3.2Q2.5 0.6 6 0.8Q8.4 1 8.6 3.4Q8.4 5.8 6 6Q2.5 6.2 0.5 3.2Z" fill="#d8d8d8"/><rect x="9.6" y="2.6" width="10.6" height="1.6" fill="#d8d8d8"/><rect x="2.6" y="11.2" width="9" height="1.8" fill="#d8d8d8"/><path d="M12.4 12Q14 8.4 18.6 7.4Q20.6 9.4 20.4 12Q20.6 14.8 18.6 16.6Q14 15.6 12.4 12Z" fill="#d8d8d8"/></svg>
<span class="t" style="left:1526px;top:158px;font-size:19px;line-height:22px;color:#d8d8d8;">A</span>
<div style="left:1541px;top:161px;width:1px;height:18px;background:#d8d8d8;"></div>
<span class="t" style="left:1526px;top:186px;font-size:21px;line-height:22px;color:#d8d8d8;">¶</span>
<svg class="i" style="left:1524px;top:229px" width="18" height="19" viewBox="0 0 18 19" ><path d="M8.6 1L15.8 4.6L8.6 8.6L1.4 4.6Z" fill="#6e6e6e"/><path d="M8.6 1L15.8 4.6V13.4L8.6 17.6L1.4 13.4V4.6Z" fill="none" stroke="#d8d8d8" stroke-width="1.3" stroke-linejoin="round"/><path d="M1.6 4.8L8.6 8.6L15.6 4.8M8.6 8.6V17.4" fill="none" stroke="#d8d8d8" stroke-width="1.2"/></svg>
<svg class="i" style="left:1852px;top:90px" width="16" height="22" viewBox="0 0 16 22" ><path d="M8 1.4Q13.6 1.8 13.8 7.2Q13.6 10 11.6 12Q10.6 13.2 10.6 15H5.4Q5.4 13.2 4.4 12Q2.4 10 2.2 7.2Q2.4 1.8 8 1.4Z" fill="none" stroke="#d8d8d8" stroke-width="1.4"/><path d="M5.6 16.6H10.4V18.4Q10.2 19.8 8 19.8Q5.8 19.8 5.6 18.4Z" fill="#d8d8d8"/></svg>
<svg class="i" style="left:1851px;top:134px" width="18" height="16" viewBox="0 0 18 16" ><rect x="3.6" y="0.7" width="12.6" height="12" rx="1.4" fill="none" stroke="#d8d8d8" stroke-width="1.3"/><path d="M2 3V13Q2 14.6 3.6 14.6H13" fill="none" stroke="#d8d8d8" stroke-width="1.3"/><path d="M10 1V7.4L11.8 6L13.6 7.4V1Z" fill="#d8d8d8"/></svg>
<svg class="i" style="left:1557px;top:431px" width="19" height="19" viewBox="0 0 19 19" ><g transform="scale(1.2)"><path d="M13.4 1.2Q14.2 1.5 13.6 2.6L9.4 9L7.8 7.9L12.2 1.7Q12.8 1 13.4 1.2Z" fill="#d8d8d8"/><path d="M7.3 8.7L8.8 9.9Q8.6 12.3 6.3 13Q4.3 13.5 2.8 12.8Q4.3 12 4.6 10.6Q5.2 8.5 7.3 8.7Z" fill="#d8d8d8"/><path d="M0.6 4.9L3.8 2.5V4.1H8V5.6H3.8V7.3Z" fill="#d8d8d8"/><path d="M12.8 6.6Q13.4 9.4 10.6 11.4" fill="none" stroke="#d8d8d8" stroke-width="0.9" stroke-dasharray="1 1.2"/></g></svg>
<svg class="i" style="left:1585px;top:465px" width="15" height="17" viewBox="0 0 15 17" ><path d="M0.7 0.7H10.4L14 4.2V15.8H0.7Z" fill="none" stroke="#d8d8d8" stroke-width="1.3"/><path d="M3 5.5H11.5M3 8H11.5M3 10.5H11.5M3 13H11.5" stroke="#d8d8d8" stroke-width="1.1"/></svg>
<svg class="i" style="left:1736px;top:677px" width="16" height="14" viewBox="0 0 16 14" ><path d="M6.4 0.8H11.4L14.4 3.8V12.4H6.4Z" fill="#d0d0d0"/><path d="M11 0.8V4.2H14.4" fill="none" stroke="#323232" stroke-width="1"/><path d="M0 7.4H9M4.6 3.4V11.6" stroke="#323232" stroke-width="3.6"/><path d="M0.4 7.4H8.6M4.6 3.6V11.4" stroke="#d0d0d0" stroke-width="1.8"/></svg>
<svg class="i" style="left:1768px;top:678px" width="15" height="12" viewBox="0 0 15 12" ><path d="M1.4 2.2H4.4L5.4 0.6H9.6L10.6 2.2H13.6Q14.4 2.2 14.4 3V10.2Q14.4 11 13.6 11H1.4Q0.6 11 0.6 10.2V3Q0.6 2.2 1.4 2.2Z" fill="#d0d0d0"/><circle cx="7.5" cy="6.4" r="3" fill="#323232"/><circle cx="7.5" cy="6.4" r="1.6" fill="#d0d0d0"/></svg>
<svg class="i" style="left:1797px;top:677px" width="13" height="14" viewBox="0 0 13 14" ><path d="M0.8 2.6H12.2M4.4 2.4V0.8H8.6V2.4" fill="none" stroke="#d0d0d0" stroke-width="1.3"/><path d="M2 4H11V12.4Q11 13.2 10.2 13.2H2.8Q2 13.2 2 12.4Z" fill="none" stroke="#d0d0d0" stroke-width="1.3"/><path d="M4.6 5.6V11.6M6.5 5.6V11.6M8.4 5.6V11.6" stroke="#d0d0d0" stroke-width="1"/></svg>
<svg class="i" style="left:1569px;top:736px" width="13" height="15" viewBox="0 0 13 15" ><path d="M0.8 0.8H7.6L11.6 4.8V13.8H0.8Z" fill="none" stroke="#e8e8e8" stroke-width="1.4"/><path d="M7.4 1V5H11.4" fill="none" stroke="#e8e8e8" stroke-width="1.2"/></svg>
<svg class="i" style="left:1801px;top:994px" width="14" height="12" viewBox="0 0 14 12" ><circle cx="2.6" cy="3" r="1.7" fill="none" stroke="#1278e0" stroke-width="1.3"/><path d="M9.4 5.4Q11.6 5.4 11.2 8Q10.8 10 8.6 11Q9.8 9.6 9.4 8.4Q8.2 8 8.2 6.8Q8.4 5.4 9.4 5.4Z" fill="#1278e0"/></svg>
<svg class="i" style="left:1825px;top:992px" width="12" height="17" viewBox="0 0 12 17" ><rect x="3.4" y="0.6" width="5.2" height="9.4" rx="2.6" fill="#1278e0"/><path d="M1 7.4Q1 12 6 12Q11 12 11 7.4M6 12V15M3 15.4H9" fill="none" stroke="#1278e0" stroke-width="1.5"/></svg>
<svg class="i" style="left:1848px;top:995px" width="16" height="11" viewBox="0 0 16 11" ><rect x="0.5" y="0.5" width="15" height="10" rx="1.4" fill="#1278e0"/><g fill="#fff"><rect x="2.4" y="2.4" width="1.8" height="1.6"/><rect x="5.4" y="2.4" width="1.8" height="1.6"/><rect x="8.4" y="2.4" width="1.8" height="1.6"/><rect x="11.4" y="2.4" width="1.8" height="1.6"/><rect x="2.4" y="5" width="1.8" height="1.6"/><rect x="5.4" y="5" width="1.8" height="1.6"/><rect x="8.4" y="5" width="1.8" height="1.6"/><rect x="11.4" y="5" width="1.8" height="1.6"/><rect x="4" y="7.6" width="8" height="1.4"/></g></svg>
<svg class="i" style="left:1872px;top:993px" width="17" height="15" viewBox="0 0 17 15" ><path d="M5.4 0.6Q8.5 3 11.6 0.6L16.4 3.4L14.6 7L12.6 6V14.4H4.4V6L2.4 7L0.6 3.4Z" fill="#1278e0"/></svg>
<svg class="i" style="left:1897px;top:994px" width="14" height="14" viewBox="0 0 14 14" ><rect x="0.5" y="0.5" width="5.4" height="5.4" rx="1.2" fill="#1278e0"/><rect x="8" y="0.5" width="5.4" height="5.4" rx="2.7" fill="#1278e0"/><rect x="0.5" y="8" width="5.4" height="5.4" rx="1.2" fill="#1278e0"/><rect x="8" y="8" width="5.4" height="5.4" rx="1.2" fill="#1278e0"/></svg>
</div></body></html>
